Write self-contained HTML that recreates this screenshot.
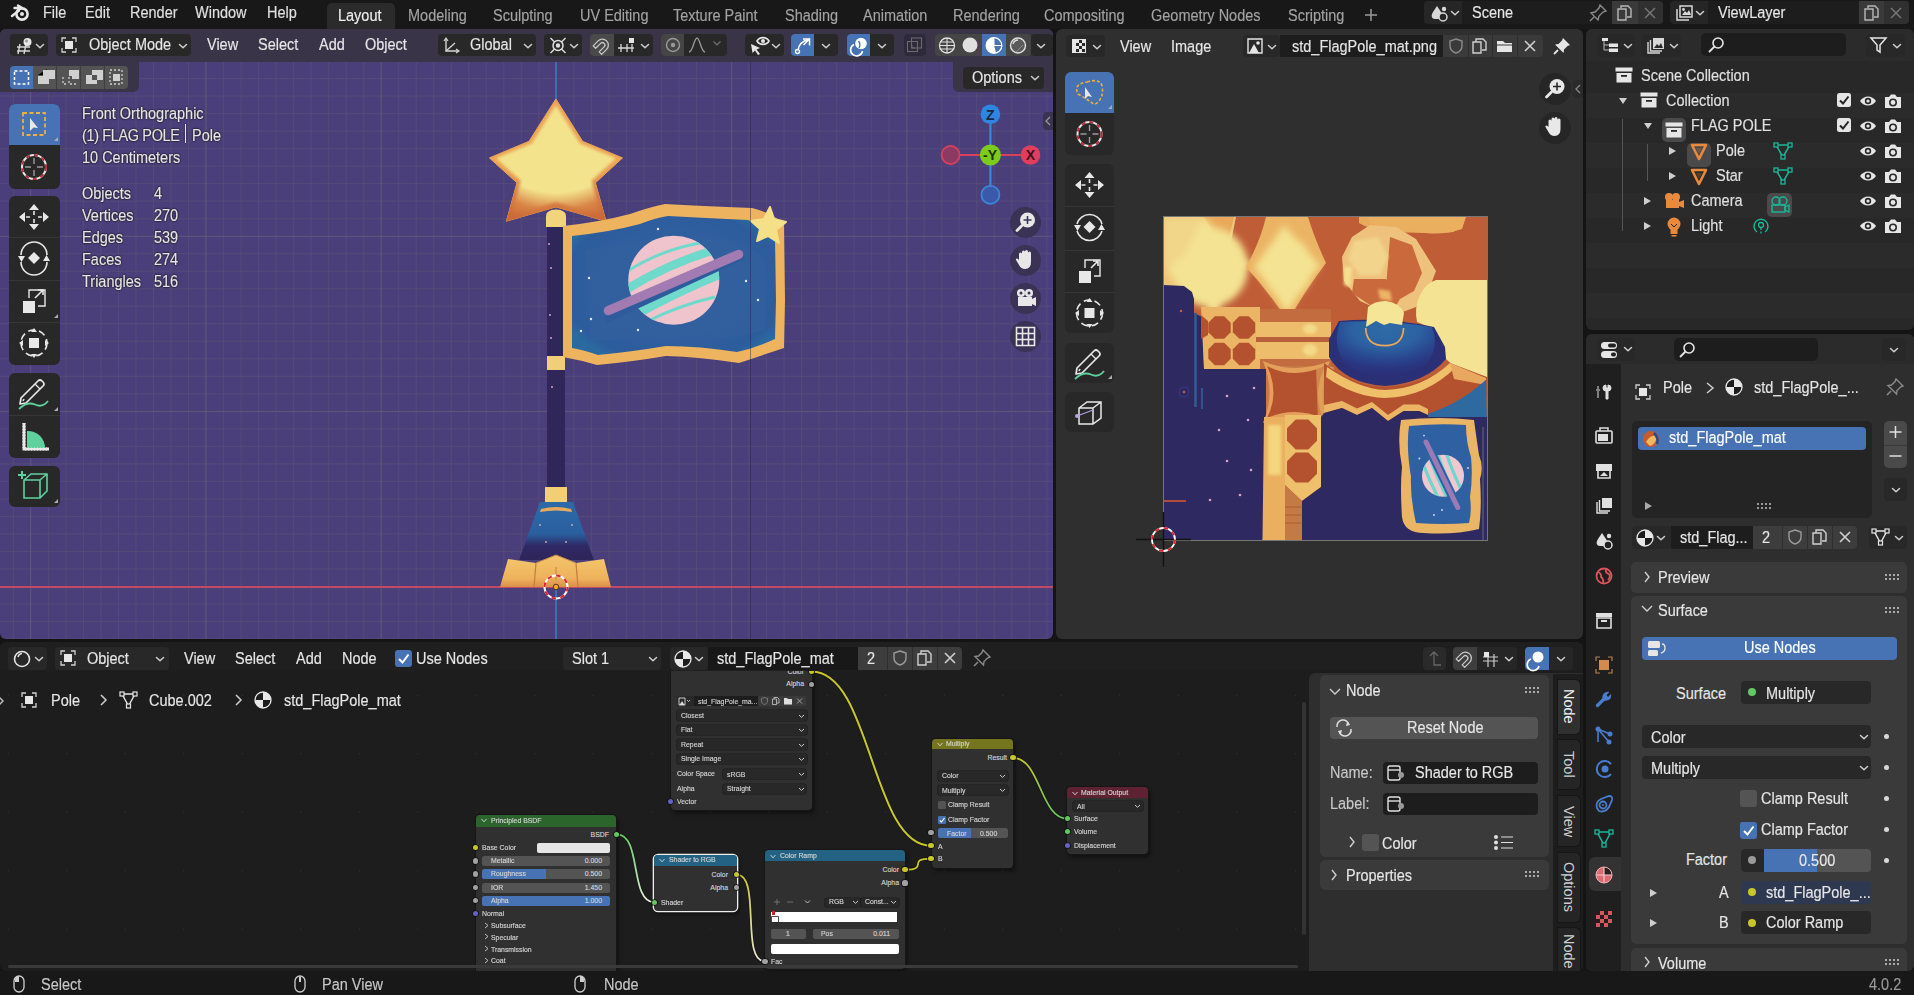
<!DOCTYPE html><html><head><meta charset="utf-8"><style>

*{box-sizing:border-box}
html,body{margin:0;padding:0}
body{width:1914px;height:995px;position:relative;overflow:hidden;background:#141414;font-family:"Liberation Sans",sans-serif;}
.r{position:absolute;display:block}
.t{position:absolute;white-space:nowrap;-webkit-text-stroke:0.15px currentColor}
.sh{text-shadow:0 0 2px #000,0 0 1px #000,1px 1px 1px rgba(0,0,0,.6)}
svg{overflow:visible}

</style></head><body>
<div class="r" style="left:0px;top:0px;width:1914px;height:29px;background:#181818;"></div>
<svg class="r" style="left:10px;top:3px;" width="22" height="20" viewBox="0 0 22 20"><circle cx="12" cy="11" r="5.6" fill="none" stroke="#e8e8e8" stroke-width="2.6"/><circle cx="12" cy="11" r="2" fill="#e8e8e8"/><path d="M2 13 L9 7.5 M4.5 5 L12 5 M8 2.5 L14 6" stroke="#e8e8e8" stroke-width="2.4" stroke-linecap="round"/></svg>
<div class="t " style="left:42.5px;top:4.50px;font-size:15.95px;line-height:15.95px;color:#e0e0e0;transform:scaleX(0.9091);transform-origin:0 0;">File</div>
<div class="t " style="left:84.5px;top:4.50px;font-size:15.95px;line-height:15.95px;color:#e0e0e0;transform:scaleX(0.9091);transform-origin:0 0;">Edit</div>
<div class="t " style="left:129.5px;top:4.50px;font-size:15.95px;line-height:15.95px;color:#e0e0e0;transform:scaleX(0.9091);transform-origin:0 0;">Render</div>
<div class="t " style="left:195px;top:4.50px;font-size:15.95px;line-height:15.95px;color:#e0e0e0;transform:scaleX(0.9091);transform-origin:0 0;">Window</div>
<div class="t " style="left:267.3px;top:4.50px;font-size:15.95px;line-height:15.95px;color:#e0e0e0;transform:scaleX(0.9091);transform-origin:0 0;">Help</div>
<div class="r" style="left:327px;top:3px;width:68px;height:26px;background:#2b2b2b;border-radius:5px 5px 0 0"></div>
<div class="t " style="left:338.4px;top:8.10px;font-size:15.95px;line-height:15.95px;color:#f0f0f0;transform:scaleX(0.9091);transform-origin:0 0;">Layout</div>
<div class="t " style="left:408.3px;top:8.10px;font-size:15.95px;line-height:15.95px;color:#a3a3a3;transform:scaleX(0.9091);transform-origin:0 0;">Modeling</div>
<div class="t " style="left:493px;top:8.10px;font-size:15.95px;line-height:15.95px;color:#a3a3a3;transform:scaleX(0.9091);transform-origin:0 0;">Sculpting</div>
<div class="t " style="left:579.7px;top:8.10px;font-size:15.95px;line-height:15.95px;color:#a3a3a3;transform:scaleX(0.9091);transform-origin:0 0;">UV Editing</div>
<div class="t " style="left:672.7px;top:8.10px;font-size:15.95px;line-height:15.95px;color:#a3a3a3;transform:scaleX(0.9091);transform-origin:0 0;">Texture Paint</div>
<div class="t " style="left:785.3px;top:8.10px;font-size:15.95px;line-height:15.95px;color:#a3a3a3;transform:scaleX(0.9091);transform-origin:0 0;">Shading</div>
<div class="t " style="left:863.2px;top:8.10px;font-size:15.95px;line-height:15.95px;color:#a3a3a3;transform:scaleX(0.9091);transform-origin:0 0;">Animation</div>
<div class="t " style="left:952.8px;top:8.10px;font-size:15.95px;line-height:15.95px;color:#a3a3a3;transform:scaleX(0.9091);transform-origin:0 0;">Rendering</div>
<div class="t " style="left:1044.3px;top:8.10px;font-size:15.95px;line-height:15.95px;color:#a3a3a3;transform:scaleX(0.9091);transform-origin:0 0;">Compositing</div>
<div class="t " style="left:1151px;top:8.10px;font-size:15.95px;line-height:15.95px;color:#a3a3a3;transform:scaleX(0.9091);transform-origin:0 0;">Geometry Nodes</div>
<div class="t " style="left:1287.5px;top:8.10px;font-size:15.95px;line-height:15.95px;color:#a3a3a3;transform:scaleX(0.9091);transform-origin:0 0;">Scripting</div>
<svg class="r" style="left:1363px;top:7px;" width="16" height="16" viewBox="0 0 16 16"><path d="M8 2 V14 M2 8 H14" stroke="#9a9a9a" stroke-width="1.5"/></svg>
<div class="r" style="left:1424px;top:1px;width:239px;height:23px;background:#262626;border-radius:4px"></div>
<div class="r" style="left:1462px;top:1px;width:150px;height:23px;background:#1d1d1d;"></div>
<div class="r" style="left:1612px;top:1px;width:26px;height:23px;background:#3a3a3a;"></div>
<div class="r" style="left:1638px;top:1px;width:25px;height:23px;background:#303030;border-radius:0 4px 4px 0"></div>
<svg class="r" style="left:1429px;top:3px;" width="40" height="20" viewBox="0 0 40 20"><path d="M6 16 C2 16 2 12 4 9 L8 3 L12 9 C14 12 13 16 9 16Z" fill="#d8d8d8"/><circle cx="15" cy="6" r="2.2" fill="#d8d8d8"/><circle cx="14" cy="14" r="4" fill="#262626" stroke="#d8d8d8" stroke-width="1.5"/></svg>
<svg class="r" style="left:1450px;top:10px;" width="10" height="6" viewBox="0 0 10 6"><path d="M1.5 1.5 L5 4.8 L8.5 1.5" fill="none" stroke="#cfcfcf" stroke-width="1.5" stroke-linecap="round" stroke-linejoin="round"/></svg>
<div class="t " style="left:1472.3px;top:5.10px;font-size:15.95px;line-height:15.95px;color:#e6e6e6;transform:scaleX(0.9091);transform-origin:0 0;">Scene</div>
<svg class="r" style="left:1588px;top:3px;" width="20" height="20" viewBox="0 0 20 20"><path d="M12 2 L18 8 L15 9 L11 13 L10 17 L3 10 L7 9 L11 5Z M6 14 L2 18" fill="none" stroke="#8a8a8a" stroke-width="1.4"/></svg>
<svg class="r" style="left:1615px;top:3px;" width="20" height="20" viewBox="0 0 20 20"><path d="M6 5 V3 H13 L16 6 V14 H12 M3 6 H11 V17 H3Z" fill="none" stroke="#b8b8b8" stroke-width="1.4"/></svg>
<svg class="r" style="left:1641px;top:4px;" width="18" height="18" viewBox="0 0 18 18"><path d="M4 4 L14 14 M14 4 L4 14" stroke="#7a7a7a" stroke-width="1.4"/></svg>
<div class="r" style="left:1670px;top:1px;width:239px;height:23px;background:#262626;border-radius:4px"></div>
<div class="r" style="left:1708px;top:1px;width:151px;height:23px;background:#1d1d1d;"></div>
<div class="r" style="left:1859px;top:1px;width:25px;height:23px;background:#3a3a3a;"></div>
<div class="r" style="left:1884px;top:1px;width:25px;height:23px;background:#303030;border-radius:0 4px 4px 0"></div>
<svg class="r" style="left:1674px;top:3px;" width="24" height="20" viewBox="0 0 24 20"><path d="M3 6 V17 H15 M6 3 H18 V14 H6Z" fill="none" stroke="#d8d8d8" stroke-width="1.5"/><path d="M8 12 L11 8 L13 10 L15 7 L17 12Z" fill="#d8d8d8"/><circle cx="9.5" cy="6.5" r="1.4" fill="#d8d8d8"/></svg>
<svg class="r" style="left:1695px;top:10px;" width="10" height="6" viewBox="0 0 10 6"><path d="M1.5 1.5 L5 4.8 L8.5 1.5" fill="none" stroke="#cfcfcf" stroke-width="1.5" stroke-linecap="round" stroke-linejoin="round"/></svg>
<div class="t " style="left:1718px;top:5.10px;font-size:15.95px;line-height:15.95px;color:#e6e6e6;transform:scaleX(0.9091);transform-origin:0 0;">ViewLayer</div>
<svg class="r" style="left:1862px;top:3px;" width="20" height="20" viewBox="0 0 20 20"><path d="M6 5 V3 H13 L16 6 V14 H12 M3 6 H11 V17 H3Z" fill="none" stroke="#b8b8b8" stroke-width="1.4"/></svg>
<svg class="r" style="left:1887px;top:4px;" width="18" height="18" viewBox="0 0 18 18"><path d="M4 4 L14 14 M14 4 L4 14" stroke="#7a7a7a" stroke-width="1.4"/></svg>
<div class="r" style="left:0px;top:29px;width:1053px;height:610px;background:#4b3f7a;border-radius:6px;overflow:hidden;background-color:#4b3f7b;background-image:linear-gradient(90deg, rgba(100,95,118,0.6) 1.2px, transparent 1.2px),linear-gradient(0deg, rgba(100,95,118,0.6) 1.2px, transparent 1.2px),linear-gradient(90deg, rgba(92,85,115,0.5) 1px, transparent 1px),linear-gradient(0deg, rgba(92,85,115,0.5) 1px, transparent 1px);background-size:175.3px 175.3px,175.3px 175.3px,17.53px 17.53px,17.53px 17.53px;background-position:30px 32.5px,30px 32.5px,12.9px 15px,12.9px 15px;"></div>
<div class="r" style="left:555px;top:29px;width:2px;height:72px;background:#3d6fb0;"></div>
<div class="r" style="left:555px;top:589px;width:2px;height:50px;background:#3d6fb0;"></div>
<div class="r" style="left:0px;top:586px;width:1053px;height:1.6px;background:#c04a62;"></div>
<div class="r" style="left:0px;top:29px;width:1053px;height:33px;background:#393448;border-radius:6px 6px 0 0"></div>
<div class="r" style="left:0px;top:62px;width:139px;height:30px;background:#393448;border-radius:0 0 6px 0"></div>
<div class="r" style="left:10px;top:34px;width:38px;height:22px;background:#282828;border-radius:4px;"></div>
<svg class="r" style="left:14px;top:36px;" width="24" height="18" viewBox="0 0 24 18"><path d="M3 11 H16 M3 15 H16 M6 8 L4 18 M12 8 L10 18" stroke="#d6d6d6" stroke-width="1.4"/><circle cx="13.5" cy="6" r="4" fill="#e6e6e6"/><circle cx="12.5" cy="5" r="1.5" fill="#999"/></svg>
<svg class="r" style="left:35px;top:43px;" width="10" height="6" viewBox="0 0 10 6"><path d="M1.5 1.5 L5 4.8 L8.5 1.5" fill="none" stroke="#cfcfcf" stroke-width="1.5" stroke-linecap="round" stroke-linejoin="round"/></svg>
<div class="r" style="left:56px;top:34px;width:135px;height:22px;background:#282828;border-radius:4px;"></div>
<svg class="r" style="left:60px;top:36px;" width="22" height="18" viewBox="0 0 22 18"><path d="M2 6 V2 H6 M12 2 H16 V6 M16 12 V16 H12 M6 16 H2 V12" fill="none" stroke="#cfcfcf" stroke-width="1.3"/><rect x="5" y="5" width="8" height="8" fill="#e6e6e6"/></svg>
<div class="t " style="left:88.5px;top:37.30px;font-size:15.95px;line-height:15.95px;color:#e6e6e6;transform:scaleX(0.9091);transform-origin:0 0;">Object Mode</div>
<svg class="r" style="left:178px;top:43px;" width="10" height="6" viewBox="0 0 10 6"><path d="M1.5 1.5 L5 4.8 L8.5 1.5" fill="none" stroke="#cfcfcf" stroke-width="1.5" stroke-linecap="round" stroke-linejoin="round"/></svg>
<div class="t " style="left:207px;top:37.30px;font-size:15.95px;line-height:15.95px;color:#e6e6e6;transform:scaleX(0.9091);transform-origin:0 0;">View</div>
<div class="t " style="left:258px;top:37.30px;font-size:15.95px;line-height:15.95px;color:#e6e6e6;transform:scaleX(0.9091);transform-origin:0 0;">Select</div>
<div class="t " style="left:319px;top:37.30px;font-size:15.95px;line-height:15.95px;color:#e6e6e6;transform:scaleX(0.9091);transform-origin:0 0;">Add</div>
<div class="t " style="left:365px;top:37.30px;font-size:15.95px;line-height:15.95px;color:#e6e6e6;transform:scaleX(0.9091);transform-origin:0 0;">Object</div>
<div class="r" style="left:438px;top:34px;width:98px;height:22px;background:#282828;border-radius:4px;"></div>
<svg class="r" style="left:442px;top:35px;" width="22" height="20" viewBox="0 0 22 20"><path d="M4 4 V16 H16" fill="none" stroke="#d6d6d6" stroke-width="1.4"/><path d="M4 16 L13 8" stroke="#d6d6d6" stroke-width="1.4"/><path d="M2 6 L4 3 L6 6 M14 14 L17 16 L14 18" fill="none" stroke="#d6d6d6" stroke-width="1.2"/></svg>
<div class="t " style="left:470px;top:37.30px;font-size:15.95px;line-height:15.95px;color:#e6e6e6;transform:scaleX(0.9091);transform-origin:0 0;">Global</div>
<svg class="r" style="left:523px;top:43px;" width="10" height="6" viewBox="0 0 10 6"><path d="M1.5 1.5 L5 4.8 L8.5 1.5" fill="none" stroke="#cfcfcf" stroke-width="1.5" stroke-linecap="round" stroke-linejoin="round"/></svg>
<div class="r" style="left:544px;top:34px;width:38px;height:22px;background:#282828;border-radius:4px;"></div>
<svg class="r" style="left:548px;top:36px;" width="20" height="19" viewBox="0 0 20 19"><circle cx="10" cy="9.5" r="5" fill="none" stroke="#e0e0e0" stroke-width="1.5"/><circle cx="10" cy="9.5" r="2.2" fill="#e0e0e0"/><path d="M2.5 2 L6.5 6 M17.5 2 L13.5 6 M2.5 17 L6.5 13 M17.5 17 L13.5 13" stroke="#e0e0e0" stroke-width="1.4"/></svg>
<svg class="r" style="left:569px;top:43px;" width="10" height="6" viewBox="0 0 10 6"><path d="M1.5 1.5 L5 4.8 L8.5 1.5" fill="none" stroke="#cfcfcf" stroke-width="1.5" stroke-linecap="round" stroke-linejoin="round"/></svg>
<div class="r" style="left:590px;top:34px;width:63px;height:22px;background:#282828;border-radius:4px;"></div>
<div class="r" style="left:590px;top:34px;width:24px;height:22px;background:#4a4a4a;border-radius:4px 0 0 4px"></div>
<svg class="r" style="left:592px;top:36px;" width="20" height="19" viewBox="0 0 20 19"><g transform="rotate(45 10 9.5)"><path d="M4 16 V9 A6 6 0 0 1 16 9 V16 H12.5 V9 A2.5 2.5 0 0 0 7.5 9 V16Z" fill="none" stroke="#c8c8c8" stroke-width="1.3" stroke-linejoin="round"/></g></svg>
<svg class="r" style="left:616px;top:36px;" width="22" height="18" viewBox="0 0 22 18"><path d="M2 12 H18 M5 8 V16 M11 8 V16 M16 8 V16" stroke="#d6d6d6" stroke-width="1.3"/><rect x="13" y="2" width="5" height="5" fill="#e6e6e6"/></svg>
<svg class="r" style="left:640px;top:43px;" width="10" height="6" viewBox="0 0 10 6"><path d="M1.5 1.5 L5 4.8 L8.5 1.5" fill="none" stroke="#cfcfcf" stroke-width="1.5" stroke-linecap="round" stroke-linejoin="round"/></svg>
<div class="r" style="left:661px;top:34px;width:66px;height:22px;background:#282828;border-radius:4px;"></div>
<div class="r" style="left:661px;top:34px;width:23px;height:22px;background:#454545;border-radius:4px 0 0 4px"></div>
<svg class="r" style="left:663px;top:36px;" width="20" height="18" viewBox="0 0 20 18"><circle cx="10" cy="9" r="6.5" fill="none" stroke="#9a9a9a" stroke-width="1.4"/><circle cx="10" cy="9" r="2.2" fill="#9a9a9a"/></svg>
<svg class="r" style="left:687px;top:36px;" width="22" height="18" viewBox="0 0 22 18"><path d="M2 16 C6 16 7 2 10 2 C13 2 14 16 18 16" fill="none" stroke="#9a9a9a" stroke-width="1.3"/></svg>
<svg class="r" style="left:712px;top:40px;" width="10" height="8" viewBox="0 0 10 8"><path d="M1.5 1.5 L5 4.8 L8.5 1.5" fill="none" stroke="#6a6a6a" stroke-width="1.4"/></svg>
<div class="r" style="left:745px;top:34px;width:39px;height:22px;background:#282828;border-radius:4px;"></div>
<svg class="r" style="left:748px;top:35px;" width="22" height="20" viewBox="0 0 22 20"><path d="M9 6 C11.5 1.5 18.5 1.5 21 6 C18.5 10.5 11.5 10.5 9 6Z" fill="none" stroke="#e6e6e6" stroke-width="1.6"/><circle cx="15" cy="6" r="2" fill="#e6e6e6"/><path d="M3 9 L12 13 L8.5 14.5 L12 19 L10 20 L7 15.5 L4.5 18Z" fill="#e6e6e6"/></svg>
<svg class="r" style="left:771px;top:43px;" width="10" height="6" viewBox="0 0 10 6"><path d="M1.5 1.5 L5 4.8 L8.5 1.5" fill="none" stroke="#cfcfcf" stroke-width="1.5" stroke-linecap="round" stroke-linejoin="round"/></svg>
<div class="r" style="left:791px;top:34px;width:47px;height:22px;background:#282828;border-radius:4px;"></div>
<div class="r" style="left:791px;top:34px;width:23px;height:22px;background:#4772b3;border-radius:4px 0 0 4px"></div>
<svg class="r" style="left:793px;top:36px;" width="20" height="19" viewBox="0 0 20 19"><path d="M5 14.5 C5.5 9 9 5 16 3.5" fill="none" stroke="#fff" stroke-width="1.5"/><path d="M10 3 H16.5 V9.5" fill="none" stroke="#fff" stroke-width="1.5"/><path d="M16.5 3 L10.5 9" stroke="#fff" stroke-width="1.5"/><circle cx="4.5" cy="15.5" r="2" fill="none" stroke="#fff" stroke-width="1.4"/></svg>
<svg class="r" style="left:821px;top:43px;" width="10" height="6" viewBox="0 0 10 6"><path d="M1.5 1.5 L5 4.8 L8.5 1.5" fill="none" stroke="#cfcfcf" stroke-width="1.5" stroke-linecap="round" stroke-linejoin="round"/></svg>
<div class="r" style="left:847px;top:34px;width:47px;height:22px;background:#282828;border-radius:4px;"></div>
<div class="r" style="left:847px;top:34px;width:23px;height:22px;background:#4772b3;border-radius:4px 0 0 4px"></div>
<svg class="r" style="left:849px;top:36px;" width="20" height="19" viewBox="0 0 20 19"><circle cx="12" cy="7.5" r="5.8" fill="#fff"/><path d="M9.5 5 Q12 8 10 12" fill="none" stroke="#4772b3" stroke-width="1.4"/><path d="M5 8.5 A6 6 0 1 0 13.5 15" fill="none" stroke="#fff" stroke-width="1.6"/></svg>
<svg class="r" style="left:877px;top:43px;" width="10" height="6" viewBox="0 0 10 6"><path d="M1.5 1.5 L5 4.8 L8.5 1.5" fill="none" stroke="#cfcfcf" stroke-width="1.5" stroke-linecap="round" stroke-linejoin="round"/></svg>
<div class="r" style="left:904px;top:34px;width:22px;height:22px;background:#2e2a3b;border-radius:4px;"></div>
<svg class="r" style="left:906px;top:36px;" width="18" height="18" viewBox="0 0 18 18"><rect x="1.5" y="5.5" width="10" height="10" fill="none" stroke="#6a6a6a" stroke-width="1.1"/><rect x="5.5" y="2" width="10" height="10" fill="none" stroke="#6a6a6a" stroke-width="1.1"/><path d="M6 9 V12 H9" fill="none" stroke="#6a6a6a" stroke-width="1"/></svg>
<div class="r" style="left:935px;top:34px;width:96px;height:22px;background:#454545;border-radius:4px;"></div>
<div class="r" style="left:982px;top:34px;width:24px;height:22px;background:#4772b3;"></div>
<svg class="r" style="left:937px;top:36px;" width="20" height="19" viewBox="0 0 20 19"><circle cx="10" cy="9.5" r="7.5" fill="none" stroke="#e0e0e0" stroke-width="1.3"/><path d="M2.5 9.5 H17.5 M10 2 V17 M3.5 6 H16.5 M3.5 13 H16.5" stroke="#e0e0e0" stroke-width="1.1"/></svg>
<svg class="r" style="left:960px;top:36px;" width="20" height="18" viewBox="0 0 20 18"><circle cx="10" cy="9" r="7.5" fill="#e0e0e0"/></svg>
<svg class="r" style="left:984px;top:36px;" width="20" height="19" viewBox="0 0 20 19"><circle cx="10" cy="9.5" r="7.8" fill="#fff"/><path d="M10 9.5 V1.7 A7.8 7.8 0 0 1 17.8 9.5 A7.8 7.8 0 0 1 12 17 Q11 12 10 9.5Z" fill="#4772b3"/><path d="M10 1.7 V9.5 L17.8 9.5" fill="none" stroke="#fff" stroke-width="1"/><circle cx="10" cy="9.5" r="7.8" fill="none" stroke="#fff" stroke-width="1.3"/></svg>
<svg class="r" style="left:1008px;top:36px;" width="20" height="19" viewBox="0 0 20 19"><circle cx="10" cy="9.5" r="7.5" fill="#5a5a5a" stroke="#e0e0e0" stroke-width="1.4"/><path d="M5 8 A5.5 5.5 0 0 1 10 4" fill="none" stroke="#e0e0e0" stroke-width="1.3"/><path d="M8 16 L15 9" stroke="#888" stroke-width="1"/></svg>
<div class="r" style="left:1031px;top:34px;width:22px;height:22px;background:#282828;border-radius:4px;"></div>
<svg class="r" style="left:1036px;top:43px;" width="10" height="6" viewBox="0 0 10 6"><path d="M1.5 1.5 L5 4.8 L8.5 1.5" fill="none" stroke="#cfcfcf" stroke-width="1.5" stroke-linecap="round" stroke-linejoin="round"/></svg>
<div class="r" style="left:32px;top:66px;width:96px;height:23px;background:#545454;border-radius:0 4px 4px 0"></div>
<div class="r" style="left:9.5px;top:66px;width:23px;height:23px;background:#4772b3;border-radius:4px 0 0 4px"></div>
<div class="r" style="left:56px;top:66px;width:1px;height:23px;background:#3f3f3f;"></div>
<div class="r" style="left:80px;top:66px;width:1px;height:23px;background:#3f3f3f;"></div>
<div class="r" style="left:104px;top:66px;width:1px;height:23px;background:#3f3f3f;"></div>
<svg class="r" style="left:9.5px;top:66px;" width="118" height="23" viewBox="0 0 118 23"><rect x="4.5" y="5" width="14" height="13" fill="none" stroke="#fff" stroke-width="1.5" stroke-dasharray="3 2"/><path d="M28 9 H37 V3? " /><path d="M28 18 V10 H33 V4 H45 V13 H39 V18Z" fill="#d0d0d0"/><path d="M59 11 V18 H67 M53 11 V18 H58" fill="none" stroke="#d0d0d0" stroke-width="1.3" stroke-dasharray="2 2"/><path d="M59 4 H69 V13 H62 V10 H59Z" fill="#d0d0d0"/><path d="M76 9 H82 V4 H93 V14 H87 V18 H76Z M82 9 V14 H87 V9Z" fill="#d0d0d0" fill-rule="evenodd"/><rect x="100" y="4" width="12" height="14" fill="none" stroke="#d0d0d0" stroke-width="1.3" stroke-dasharray="2 2"/><rect x="103" y="8" width="7" height="7" fill="#d0d0d0"/></svg>
<div class="r" style="left:9px;top:104px;width:51px;height:85px;background:#282828;border-radius:6px 6px 6px 6px"></div>
<div class="r" style="left:9px;top:104px;width:51px;height:41px;background:#4772b3;border-radius:6px 6px 0 0"></div>
<div class="r" style="left:9px;top:196px;width:51px;height:169px;background:#282828;border-radius:6px 6px 6px 6px"></div>
<div class="r" style="left:9px;top:373px;width:51px;height:85px;background:#282828;border-radius:6px 6px 6px 6px"></div>
<div class="r" style="left:9px;top:466px;width:51px;height:41px;background:#282828;border-radius:6px 6px 6px 6px"></div>
<div class="r" style="left:9px;top:237px;width:51px;height:1px;background:#363636;"></div>
<div class="r" style="left:9px;top:280px;width:51px;height:1px;background:#363636;"></div>
<div class="r" style="left:9px;top:322px;width:51px;height:1px;background:#363636;"></div>
<div class="r" style="left:9px;top:415px;width:51px;height:1px;background:#363636;"></div>
<svg class="r" style="left:9px;top:104px;" width="51" height="41" viewBox="0 0 51 41"><rect x="14" y="9" width="22" height="22" fill="none" stroke="#f0b03a" stroke-width="1.8" stroke-dasharray="4 2.5"/><path d="M21 14 L21 27 L24.5 23.5 L29 24Z" fill="#e8e8e8"/><path d="M45 37 L49 37 L49 33Z" fill="#aab"/></svg>
<svg class="r" style="left:9px;top:145px;" width="51" height="44" viewBox="0 0 51 44"><circle cx="25" cy="22" r="12" fill="none" stroke="#e8e8e8" stroke-width="2"/><circle cx="25" cy="22" r="12" fill="none" stroke="#b32d3a" stroke-width="2" stroke-dasharray="4 4"/><path d="M25 13 V19 M25 25 V31 M16 22 H22 M28 22 H34" stroke="#9a9a9a" stroke-width="1.4"/></svg>
<svg class="r" style="left:9px;top:196px;" width="51" height="41" viewBox="0 0 51 41"><path d="M25 8 L20 14 H30Z M25 34 L20 28 H30Z M10 21 L16 16 V26Z M40 21 L34 16 V26Z" fill="#e8e8e8"/><path d="M25 15 V19 M25 23 V27 M17 21 H21 M29 21 H33" stroke="#e8e8e8" stroke-width="1.6"/></svg>
<svg class="r" style="left:9px;top:237px;" width="51" height="43" viewBox="0 0 51 43"><path d="M12 18 A13 13 0 0 1 38 18 M38 25 A13 13 0 0 1 12 25" fill="none" stroke="#e8e8e8" stroke-width="1.6"/><path d="M25 15 L31 21 L25 27 L19 21Z" fill="#e8e8e8"/><path d="M9 19 H16 L12.5 25Z M34 24 H41 L37.5 18Z" fill="#e8e8e8"/></svg>
<svg class="r" style="left:9px;top:280px;" width="51" height="42" viewBox="0 0 51 42"><rect x="14" y="21" width="12" height="12" fill="#e8e8e8"/><path d="M20 18 V10 H36 V26 H29" fill="none" stroke="#e8e8e8" stroke-width="1.4"/><path d="M26 18 L34 10 M29 10 H34 V15" fill="none" stroke="#e8e8e8" stroke-width="1.6"/><path d="M45 38 L49 38 L49 34Z" fill="#aab"/></svg>
<svg class="r" style="left:9px;top:322px;" width="51" height="43" viewBox="0 0 51 43"><circle cx="25" cy="21" r="13" fill="none" stroke="#e8e8e8" stroke-width="1.6" stroke-dasharray="7 4"/><rect x="20" y="16" width="10" height="10" fill="#e8e8e8"/><path d="M25 6 L22 10 H28Z M25 36 L22 32 H28Z M10 21 L14 18 V24Z M40 21 L36 18 V24Z" fill="#e8e8e8"/></svg>
<svg class="r" style="left:9px;top:373px;" width="51" height="42" viewBox="0 0 51 42"><path d="M12 25 L29 8 Q31 6 33 8 L34 9 Q36 11 34 13 L17 30 L11 31Z" fill="none" stroke="#e8e8e8" stroke-width="1.7" stroke-linejoin="round"/><path d="M14 28 L15 26" stroke="#e8e8e8" stroke-width="1.5"/><path d="M26 11 L31 16" stroke="#e8e8e8" stroke-width="1.3"/><path d="M10 36 C15 31 20 29 26 31.5 C31 34 35 33 39 28" fill="none" stroke="#5fd19c" stroke-width="1.8"/><path d="M45 38 L49 38 L49 34Z" fill="#aab"/></svg>
<svg class="r" style="left:9px;top:415px;" width="51" height="43" viewBox="0 0 51 43"><path d="M15 8 V34 H40" fill="none" stroke="#e8e8e8" stroke-width="3"/><path d="M18 33 V16 A17 17 0 0 1 36 33Z" fill="#5fd19c"/><path d="M15 8 V34 H40" fill="none" stroke="#e8e8e8" stroke-width="3" stroke-dasharray="1 2"/></svg>
<svg class="r" style="left:9px;top:466px;" width="51" height="41" viewBox="0 0 51 41"><path d="M15 14 V32 H31 L38 25 V8 H22Z M15 14 H31 V32 M31 14 L38 8" fill="none" stroke="#5fd19c" stroke-width="1.6"/><path d="M9 9 H17 M13 5 V13" stroke="#5fd19c" stroke-width="2"/><path d="M45 37 L49 37 L49 33Z" fill="#aab"/></svg>
<div class="t " style="left:82px;top:105.70px;font-size:15.95px;line-height:15.95px;color:#e6e6e6;transform:scaleX(0.9091);transform-origin:0 0;text-shadow:0 0 2px #111,0 0 2px #111;">Front Orthographic</div>
<div class="t " style="left:82px;top:127.70px;font-size:15.95px;line-height:15.95px;color:#e6e6e6;transform:scaleX(0.9091);transform-origin:0 0;text-shadow:0 0 2px #111,0 0 2px #111;letter-spacing:-0.4px;">(1) FLAG POLE</div>
<div class="r" style="left:185px;top:124px;width:1.3px;height:19px;background:#e8e8e8;box-shadow:0 0 2px #111"></div>
<div class="t " style="left:192px;top:127.70px;font-size:15.95px;line-height:15.95px;color:#e6e6e6;transform:scaleX(0.9091);transform-origin:0 0;text-shadow:0 0 2px #111,0 0 2px #111;">Pole</div>
<div class="t " style="left:82px;top:149.70px;font-size:15.95px;line-height:15.95px;color:#e6e6e6;transform:scaleX(0.9091);transform-origin:0 0;text-shadow:0 0 2px #111,0 0 2px #111;">10 Centimeters</div>
<div class="t " style="left:82px;top:185.70px;font-size:15.95px;line-height:15.95px;color:#e6e6e6;transform:scaleX(0.9091);transform-origin:0 0;text-shadow:0 0 2px #111,0 0 2px #111;">Objects</div>
<div class="t " style="left:154px;top:185.70px;font-size:15.95px;line-height:15.95px;color:#e6e6e6;transform:scaleX(0.9091);transform-origin:0 0;text-shadow:0 0 2px #111,0 0 2px #111;">4</div>
<div class="t " style="left:82px;top:207.70px;font-size:15.95px;line-height:15.95px;color:#e6e6e6;transform:scaleX(0.9091);transform-origin:0 0;text-shadow:0 0 2px #111,0 0 2px #111;">Vertices</div>
<div class="t " style="left:154px;top:207.70px;font-size:15.95px;line-height:15.95px;color:#e6e6e6;transform:scaleX(0.9091);transform-origin:0 0;text-shadow:0 0 2px #111,0 0 2px #111;">270</div>
<div class="t " style="left:82px;top:229.70px;font-size:15.95px;line-height:15.95px;color:#e6e6e6;transform:scaleX(0.9091);transform-origin:0 0;text-shadow:0 0 2px #111,0 0 2px #111;">Edges</div>
<div class="t " style="left:154px;top:229.70px;font-size:15.95px;line-height:15.95px;color:#e6e6e6;transform:scaleX(0.9091);transform-origin:0 0;text-shadow:0 0 2px #111,0 0 2px #111;">539</div>
<div class="t " style="left:82px;top:251.70px;font-size:15.95px;line-height:15.95px;color:#e6e6e6;transform:scaleX(0.9091);transform-origin:0 0;text-shadow:0 0 2px #111,0 0 2px #111;">Faces</div>
<div class="t " style="left:154px;top:251.70px;font-size:15.95px;line-height:15.95px;color:#e6e6e6;transform:scaleX(0.9091);transform-origin:0 0;text-shadow:0 0 2px #111,0 0 2px #111;">274</div>
<div class="t " style="left:82px;top:273.70px;font-size:15.95px;line-height:15.95px;color:#e6e6e6;transform:scaleX(0.9091);transform-origin:0 0;text-shadow:0 0 2px #111,0 0 2px #111;">Triangles</div>
<div class="t " style="left:154px;top:273.70px;font-size:15.95px;line-height:15.95px;color:#e6e6e6;transform:scaleX(0.9091);transform-origin:0 0;text-shadow:0 0 2px #111,0 0 2px #111;">516</div>
<div class="r" style="left:953px;top:62px;width:100px;height:30px;background:#393448;border-radius:0 0 0 6px"></div>
<div class="r" style="left:963px;top:67px;width:81px;height:22px;background:#282828;border-radius:4px;"></div>
<div class="t " style="left:972.4px;top:70.30px;font-size:15.95px;line-height:15.95px;color:#e6e6e6;transform:scaleX(0.9091);transform-origin:0 0;">Options</div>
<svg class="r" style="left:1030px;top:75px;" width="10" height="6" viewBox="0 0 10 6"><path d="M1.5 1.5 L5 4.8 L8.5 1.5" fill="none" stroke="#cfcfcf" stroke-width="1.5" stroke-linecap="round" stroke-linejoin="round"/></svg>
<div class="r" style="left:1043px;top:112px;width:10px;height:18px;background:#3a3452;border-radius:4px 0 0 4px"></div>
<svg class="r" style="left:1044px;top:114px;" width="8" height="14" viewBox="0 0 8 14"><path d="M6 3 L2 7 L6 11" fill="none" stroke="#999" stroke-width="1.3"/></svg>
<svg class="r" style="left:930px;top:95px;" width="120" height="120" viewBox="0 0 120 120"><path d="M20.6 60 H100.5" stroke="#d8405c" stroke-width="2.2"/><path d="M60.4 19.3 V99.8" stroke="#3a86d8" stroke-width="2.2"/><circle cx="20.6" cy="60" r="9" fill="#8c3a64" stroke="#d8405c" stroke-width="1.8"/><circle cx="60.4" cy="99.8" r="9" fill="#3c58a8" stroke="#3a86d8" stroke-width="1.8"/><circle cx="60.4" cy="19.3" r="9.8" fill="#2f86e0"/><circle cx="100.5" cy="60" r="9.8" fill="#e03e5c"/><circle cx="60.4" cy="60" r="10.5" fill="#7ccc1c"/><text x="60.4" y="24.5" font-family="Liberation Sans" font-weight="bold" font-size="14" text-anchor="middle" fill="#1a2840">Z</text><text x="100.5" y="65.2" font-family="Liberation Sans" font-weight="bold" font-size="14" text-anchor="middle" fill="#40101a">X</text><text x="60" y="65.2" font-family="Liberation Sans" font-weight="bold" font-size="14" text-anchor="middle" fill="#1f3306">-Y</text></svg>
<div class="r" style="left:1010px;top:207.3px;width:31px;height:31px;background:#3b3356;border-radius:50%"></div>
<div class="r" style="left:1010px;top:245.0px;width:31px;height:31px;background:#3b3356;border-radius:50%"></div>
<div class="r" style="left:1010px;top:283.1px;width:31px;height:31px;background:#3b3356;border-radius:50%"></div>
<div class="r" style="left:1010px;top:321.2px;width:31px;height:31px;background:#3b3356;border-radius:50%"></div>
<svg class="r" style="left:1010px;top:207.3px;" width="31" height="31" viewBox="0 0 31 31"><circle cx="17.5" cy="13" r="7.5" fill="#e8e8e8"/><path d="M17.5 9 V17 M13.5 13 H21.5" stroke="#3b3356" stroke-width="1.6"/><path d="M12 18.5 L7 23.5" stroke="#e8e8e8" stroke-width="2.8" stroke-linecap="round"/></svg>
<svg class="r" style="left:1010px;top:245px;" width="31" height="31" viewBox="0 0 31 31"><path d="M9 15 V9 Q9 7.5 10.5 7.5 Q12 7.5 12 9 V14 V7 Q12 5.5 13.5 5.5 Q15 5.5 15 7 V14 V6.5 Q15 5 16.5 5 Q18 5 18 6.5 V14 V8 Q18 6.5 19.5 6.5 Q21 6.5 21 8 V17 Q21 24 15 24 Q11 24 9 20 L6 15 Q5.5 13.5 7 13.5 Q8 13.5 9 15Z" fill="#e8e8e8"/></svg>
<svg class="r" style="left:1010px;top:283px;" width="31" height="31" viewBox="0 0 31 31"><circle cx="11" cy="10" r="4" fill="#e8e8e8"/><circle cx="19" cy="10" r="4" fill="#e8e8e8"/><rect x="8" y="14" width="14" height="9" fill="#e8e8e8"/><path d="M22 16 L26 14 V23 L22 21Z" fill="#e8e8e8"/><circle cx="11" cy="10" r="1.5" fill="#3b3356"/><circle cx="19" cy="10" r="1.5" fill="#3b3356"/></svg>
<svg class="r" style="left:1010px;top:321px;" width="31" height="31" viewBox="0 0 31 31"><path d="M6.5 6.5 H24.5 V24.5 H6.5Z M12.5 6.5 V24.5 M18.5 6.5 V24.5 M6.5 12.5 H24.5 M6.5 18.5 H24.5" fill="none" stroke="#e8e8e8" stroke-width="1.6"/></svg>
<svg class="r" style="left:0;top:0" width="1053" height="639" viewBox="0 0 1053 639"><defs><radialGradient id="starG" cx="0.5" cy="0.42" r="0.6"><stop offset="0.45" stop-color="#f5e38c"/><stop offset="0.75" stop-color="#f0c46c"/><stop offset="1" stop-color="#d2773e"/></radialGradient><linearGradient id="starB" x1="0" y1="0" x2="0" y2="1"><stop offset="0.5" stop-color="#eba455" stop-opacity="0"/><stop offset="0.8" stop-color="#d67a40" stop-opacity="1"/><stop offset="1" stop-color="#d06e3a" stop-opacity="1"/></linearGradient><radialGradient id="flagG" cx="0.5" cy="0.5" r="0.6"><stop offset="0.5" stop-color="#3160a0"/><stop offset="0.9" stop-color="#2c5c9c"/><stop offset="1" stop-color="#2a6aa0"/></radialGradient><linearGradient id="coneG" x1="0" y1="0" x2="0" y2="1"><stop offset="0" stop-color="#2d6aa8"/><stop offset="0.55" stop-color="#2a5f9f"/><stop offset="0.75" stop-color="#2f2a66"/><stop offset="1" stop-color="#2e2558"/></linearGradient><linearGradient id="baseG" x1="0" y1="0" x2="0" y2="1"><stop offset="0" stop-color="#f3c56a"/><stop offset="0.7" stop-color="#eeb25c"/><stop offset="1" stop-color="#dc8e4a"/></linearGradient><radialGradient id="starB2" gradientUnits="userSpaceOnUse" cx="556" cy="112" r="112"><stop offset="0.72" stop-color="#d67a40" stop-opacity="0"/><stop offset="0.88" stop-color="#d67a40" stop-opacity="0.9"/><stop offset="1" stop-color="#cc6a38" stop-opacity="1"/></radialGradient><filter id="softS" x="-20%" y="-20%" width="140%" height="140%"><feGaussianBlur stdDeviation="1.8"/></filter><clipPath id="planetC"><ellipse cx="673.8" cy="280.2" rx="45.5" ry="44.5"/></clipPath></defs><rect x="547" y="215" width="18" height="275" fill="#2f2659"/><rect x="547" y="356" width="18" height="14" fill="#f1cf78"/><circle cx="549" cy="244" r="1" fill="#d9a0c8"/><circle cx="551" cy="268" r="1" fill="#d9a0c8"/><circle cx="550" cy="315" r="1" fill="#d9a0c8"/><circle cx="551" cy="338" r="1" fill="#d9a0c8"/><circle cx="552" cy="387" r="1" fill="#d9a0c8"/><path d="M555.9 99 L582.6 141.3 L622.5 157.9 L595.4 182.8 L606 221.2 L555.9 206.9 L506.4 221.2 L517 182.8 L489.4 157.9 L529 141.3Z" fill="#eba455" stroke="#eba455" stroke-width="1" stroke-linejoin="miter"/><path d="M555.9 99 L582.6 141.3 L622.5 157.9 L595.4 182.8 L606 221.2 L555.9 206.9 L506.4 221.2 L517 182.8 L489.4 157.9 L529 141.3Z" fill="url(#starB)"/><g filter="url(#softS)"><path d="M555.9 105.3 L579.9 143.4 L615.9 158.3 L591.5 180.7 L601.0 215.3 L555.9 202.4 L511.4 215.3 L520.9 180.7 L496.1 158.3 L531.7 143.4Z" fill="#f3e38c"/><ellipse cx="556" cy="170" rx="34" ry="26" fill="#f3e38c"/></g><path d="M555.9 99 L582.6 141.3 L622.5 157.9 L595.4 182.8 L606 221.2 L555.9 206.9 L506.4 221.2 L517 182.8 L489.4 157.9 L529 141.3Z" fill="url(#starB2)"/><path d="M546 227 V216 Q546 210 556 209.5 Q566 210 566 216 V227Z" fill="#f2d47c"/><path d="M563 226 Q600 222 630 214 Q650 207 665 204 Q700 206 752 208 Q770 212 784 224 L785 300 L784 348 Q760 356 739 363 Q700 357 666 356 Q630 362 597 365 Q580 360 563 357Z" fill="#eeb35e"/><path d="M572 236 Q610 232 640 224 Q655 218 668 216 Q705 218 748 220 Q765 226 775 238 L776 300 L775 339 Q755 348 737 352 Q700 346 666 346 Q630 352 598 355 Q584 350 572 348Z" fill="url(#flagG)"/><path d="M585 250 Q640 238 700 236 Q750 240 765 260 L765 330 Q730 342 690 338 Q630 340 590 340Z" fill="#33619f" opacity="0.6"/><g clip-path="url(#planetC)"><rect x="620" y="230" width="110" height="110" fill="#efc4cc"/><path d="M626 272 Q660 250 700 243" stroke="#6fd9cb" stroke-width="3" fill="none"/><path d="M624 291 Q665 265 714 250" stroke="#6fd9cb" stroke-width="8.5" fill="none"/><path d="M636 314 Q680 290 722 273" stroke="#6fd9cb" stroke-width="9.5" fill="none"/><path d="M648 321 Q680 305 715 297" stroke="#6fd9cb" stroke-width="3" fill="none"/></g><path d="M606 320 L744 256" stroke="#2f5a9c" stroke-width="6"/><path d="M608.5 310.5 L738.5 254.5" stroke="#a17bb2" stroke-width="9.5" stroke-linecap="round"/><circle cx="658" cy="229" r="1.2" fill="#e6e6f6"/><circle cx="589" cy="278" r="1.2" fill="#e6e6f6"/><circle cx="746" cy="281" r="1.2" fill="#e6e6f6"/><circle cx="758" cy="300" r="1.2" fill="#e6e6f6"/><circle cx="591" cy="319" r="1.2" fill="#e6e6f6"/><circle cx="581" cy="331" r="1.2" fill="#e6e6f6"/><circle cx="638" cy="330" r="1.2" fill="#e6e6f6"/><path d="M770 207 L774 219 L786 222 L776 230 L779 243 L768 236 L757 241 L760 229 L751 221 L764 219Z" fill="#f4e088" stroke="#f4e088" stroke-width="2" stroke-linejoin="round"/><rect x="545" y="487" width="22" height="15" fill="#f2cf74"/><path d="M540 502 L573 502 L594 560 L519 560Z" fill="url(#coneG)"/><path d="M541 509 Q556 505 571 509 L572 512 Q556 509 540 512Z" fill="#e8a95a"/><circle cx="540" cy="525" r="0.9" fill="#d8b0a0"/><circle cx="572" cy="525" r="0.9" fill="#d8b0a0"/><circle cx="546" cy="542" r="0.9" fill="#d8b0a0"/><circle cx="566" cy="542" r="0.9" fill="#d8b0a0"/><path d="M500 587 L508 559 L536 563 L535 587Z" fill="url(#baseG)"/><path d="M611 587 L604 559 L576 563 L577 587Z" fill="url(#baseG)"/><path d="M534 587 L536 563 L556 555 L576 563 L578 587Z" fill="url(#baseG)"/><path d="M536 563 L556 555 L576 563" fill="none" stroke="#c98a48" stroke-width="1"/><path d="M536 563 L534 587 M576 563 L578 587" stroke="#c47c40" stroke-width="1.2"/><path d="M556 567 V580" stroke="#c7924e" stroke-width="1.3"/><circle cx="556" cy="587" r="11.5" fill="none" stroke="#fff" stroke-width="2"/><circle cx="556" cy="587" r="11.5" fill="none" stroke="#e0222e" stroke-width="2" stroke-dasharray="4.5 4.5"/><circle cx="556" cy="587" r="2.8" fill="#f5a623" stroke="#222" stroke-width="0.8"/></svg>
<div class="r" style="left:749.6px;top:62px;width:1px;height:577px;background:rgba(40,34,64,0.45);"></div>
<div class="r" style="left:1056px;top:29px;width:527px;height:610px;background:#2f2f2f;border-radius:6px"></div>
<div class="r" style="left:1066px;top:35px;width:39px;height:22px;background:#282828;border-radius:4px;"></div>
<svg class="r" style="left:1070px;top:37px;" width="22" height="18" viewBox="0 0 22 18"><rect x="2" y="2" width="14" height="14" fill="#e6e6e6"/><path d="M6 6 H9 V9 H6Z M9 9 H12 V12 H9Z M12 6 H15 V9 H12Z M6 12 H9 V15 H6Z M12 12 H15 V15 H12Z M9 3 H12 V6 H9Z" fill="#282828"/></svg>
<svg class="r" style="left:1092px;top:44px;" width="10" height="6" viewBox="0 0 10 6"><path d="M1.5 1.5 L5 4.8 L8.5 1.5" fill="none" stroke="#cfcfcf" stroke-width="1.5" stroke-linecap="round" stroke-linejoin="round"/></svg>
<div class="t " style="left:1120px;top:38.70px;font-size:15.95px;line-height:15.95px;color:#e6e6e6;transform:scaleX(0.9091);transform-origin:0 0;">View</div>
<div class="t " style="left:1171px;top:38.70px;font-size:15.95px;line-height:15.95px;color:#e6e6e6;transform:scaleX(0.9091);transform-origin:0 0;">Image</div>
<div class="r" style="left:1243px;top:35px;width:37px;height:22px;background:#282828;border-radius:4px;"></div>
<svg class="r" style="left:1246px;top:37px;" width="20" height="18" viewBox="0 0 20 18"><path d="M2 2 H16 V16 H2Z" fill="none" stroke="#e6e6e6" stroke-width="1.4"/><path d="M3 16 L8 7 L13 16Z" fill="#e6e6e6"/><circle cx="12" cy="6" r="1.8" fill="#e6e6e6"/></svg>
<svg class="r" style="left:1267px;top:44px;" width="10" height="6" viewBox="0 0 10 6"><path d="M1.5 1.5 L5 4.8 L8.5 1.5" fill="none" stroke="#cfcfcf" stroke-width="1.5" stroke-linecap="round" stroke-linejoin="round"/></svg>
<div class="r" style="left:1280px;top:35px;width:163px;height:22px;background:#1d1d1d;"></div>
<div class="t " style="left:1292px;top:38.70px;font-size:15.95px;line-height:15.95px;color:#e6e6e6;transform:scaleX(0.9091);transform-origin:0 0;">std_FlagPole_mat.png</div>
<div class="r" style="left:1443px;top:35px;width:100px;height:22px;background:#3a3a3a;border-radius:0 4px 4px 0"></div>
<div class="r" style="left:1467.6px;top:35px;width:1px;height:22px;background:#2e2e2e;"></div>
<div class="r" style="left:1492px;top:35px;width:1px;height:22px;background:#2e2e2e;"></div>
<div class="r" style="left:1517px;top:35px;width:1px;height:22px;background:#2e2e2e;"></div>
<svg class="r" style="left:1446px;top:37px;" width="20" height="18" viewBox="0 0 20 18"><path d="M10 2 L16 4 V9 C16 13 13 15 10 16 C7 15 4 13 4 9 V4Z" fill="none" stroke="#8a8a8a" stroke-width="1.4"/></svg>
<svg class="r" style="left:1470px;top:37px;" width="20" height="18" viewBox="0 0 20 18"><path d="M6 5 V2 H13 L16 5 V13 H12 M3 5 H11 V16 H3Z" fill="none" stroke="#cfcfcf" stroke-width="1.4"/></svg>
<svg class="r" style="left:1495px;top:37px;" width="20" height="18" viewBox="0 0 20 18"><path d="M2 4 H8 L10 6 H17 V15 H2Z" fill="#e6e6e6"/><path d="M2 8 H17" stroke="#3a3a3a" stroke-width="1"/></svg>
<svg class="r" style="left:1521px;top:38px;" width="18" height="16" viewBox="0 0 18 16"><path d="M4 3 L14 13 M14 3 L4 13" stroke="#d0d0d0" stroke-width="1.6"/></svg>
<svg class="r" style="left:1552px;top:36px;" width="20" height="20" viewBox="0 0 20 20"><path d="M11 2 L18 9 L15.5 10 L12 13.5 L11.5 17 L3 8.5 L6.5 8 L10 4.5Z" fill="#e6e6e6"/><path d="M6 14 L2 18" stroke="#e6e6e6" stroke-width="1.8"/></svg>
<div class="r" style="left:1065px;top:72px;width:49px;height:83px;background:#282828;border-radius:6px"></div>
<div class="r" style="left:1065px;top:72px;width:49px;height:41px;background:#4772b3;border-radius:6px 6px 0 0"></div>
<svg class="r" style="left:1065px;top:72px;" width="49" height="41" viewBox="0 0 49 41"><path d="M22 10 Q35 6 37 14 Q39 24 33 30 Q30 34 26 30 Q20 26 13 22 Q8 12 22 10Z" fill="none" stroke="#f0b03a" stroke-width="1.6" stroke-dasharray="3 2"/><path d="M20 15 L20 27 L23 24 L27 25Z" fill="#e8e8e8"/><path d="M43 37 L47 37 L47 33Z" fill="#aab"/></svg>
<svg class="r" style="left:1065px;top:113px;" width="49" height="42" viewBox="0 0 49 42"><circle cx="24.5" cy="21" r="12" fill="none" stroke="#e8e8e8" stroke-width="2"/><circle cx="24.5" cy="21" r="12" fill="none" stroke="#b32d3a" stroke-width="2" stroke-dasharray="4 4"/><path d="M24.5 12 V18 M24.5 24 V30 M15.5 21 H21.5 M27.5 21 H33.5" stroke="#9a9a9a" stroke-width="1.4"/></svg>
<div class="r" style="left:1065px;top:164px;width:49px;height:169px;background:#282828;border-radius:6px"></div>
<div class="r" style="left:1065px;top:206px;width:49px;height:1px;background:#363636;"></div>
<div class="r" style="left:1065px;top:249.5px;width:49px;height:1px;background:#363636;"></div>
<div class="r" style="left:1065px;top:291.5px;width:49px;height:1px;background:#363636;"></div>
<svg class="r" style="left:1065px;top:164px;" width="49" height="42" viewBox="0 0 49 42"><path d="M24.5 8 L19.5 14 H29.5Z M24.5 34 L19.5 28 H29.5Z M10 21 L16 16 V26Z M39 21 L33 16 V26Z" fill="#e8e8e8"/><path d="M24.5 15 V19 M24.5 23 V27 M16.5 21 H20.5 M28.5 21 H32.5" stroke="#e8e8e8" stroke-width="1.6"/></svg>
<svg class="r" style="left:1065px;top:206px;" width="49" height="43" viewBox="0 0 49 43"><path d="M12 18 A13 13 0 0 1 37 18 M37 25 A13 13 0 0 1 12 25" fill="none" stroke="#e8e8e8" stroke-width="1.6"/><path d="M24.5 15 L30.5 21 L24.5 27 L18.5 21Z" fill="#e8e8e8"/><path d="M9 19 H16 L12.5 25Z M33 24 H40 L36.5 18Z" fill="#e8e8e8"/></svg>
<svg class="r" style="left:1065px;top:249.5px;" width="49" height="42" viewBox="0 0 49 42"><rect x="14" y="21" width="12" height="12" fill="#e8e8e8"/><path d="M20 18 V10 H35 V26 H29" fill="none" stroke="#e8e8e8" stroke-width="1.4"/><path d="M26 18 L33 11 M28 11 H33 V16" fill="none" stroke="#e8e8e8" stroke-width="1.6"/></svg>
<svg class="r" style="left:1065px;top:291.5px;" width="49" height="42" viewBox="0 0 49 42"><circle cx="24.5" cy="21" r="13" fill="none" stroke="#e8e8e8" stroke-width="1.6" stroke-dasharray="7 4"/><rect x="19.5" y="16" width="10" height="10" fill="#e8e8e8"/><path d="M24.5 6 L21.5 10 H27.5Z M24.5 36 L21.5 32 H27.5Z M10 21 L14 18 V24Z M39 21 L35 18 V24Z" fill="#e8e8e8"/></svg>
<div class="r" style="left:1065px;top:342.5px;width:49px;height:40.5px;background:#282828;border-radius:6px"></div>
<svg class="r" style="left:1065px;top:342.5px;" width="49" height="40" viewBox="0 0 49 40"><path d="M12 25 L29 8 Q31 6 33 8 L34 9 Q36 11 34 13 L17 30 L11 31Z" fill="none" stroke="#e8e8e8" stroke-width="1.7" stroke-linejoin="round"/><path d="M14 28 L15 26" stroke="#e8e8e8" stroke-width="1.5"/><path d="M26 11 L31 16" stroke="#e8e8e8" stroke-width="1.3"/><path d="M10 36 C15 31 20 29 26 31.5 C31 34 35 33 39 28" fill="none" stroke="#5fd19c" stroke-width="1.8"/><path d="M43 36 L47 36 L47 32Z" fill="#aab"/></svg>
<div class="r" style="left:1065px;top:392px;width:49px;height:40px;background:#282828;border-radius:6px"></div>
<svg class="r" style="left:1065px;top:392px;" width="49" height="40" viewBox="0 0 49 40"><path d="M14 16 L22 10 H36 V26 L28 32 H14Z M14 16 H28 V32 M28 16 L36 10" fill="none" stroke="#e8e8e8" stroke-width="1.5"/><path d="M12 24 L28 18" stroke="#b0a0e0" stroke-width="1.3"/><circle cx="12" cy="24" r="2" fill="#c0a0e0"/></svg>
<div class="r" style="left:1539px;top:72.7px;width:32px;height:32px;background:#262626;border-radius:50%"></div>
<svg class="r" style="left:1539px;top:72.7px;" width="32" height="32" viewBox="0 0 32 32"><circle cx="18" cy="13.5" r="7.5" fill="#e8e8e8"/><path d="M18 9.5 V17.5 M14 13.5 H22" stroke="#262626" stroke-width="1.6"/><path d="M12.5 19 L7.5 24" stroke="#e8e8e8" stroke-width="2.8" stroke-linecap="round"/></svg>
<div class="r" style="left:1539px;top:111.6px;width:32px;height:32px;background:#262626;border-radius:50%"></div>
<svg class="r" style="left:1539px;top:111.6px;" width="32" height="32" viewBox="0 0 32 32"><path d="M9.5 15 V9 Q9.5 7.5 11 7.5 Q12.5 7.5 12.5 9 V14 V7 Q12.5 5.5 14 5.5 Q15.5 5.5 15.5 7 V14 V6.5 Q15.5 5 17 5 Q18.5 5 18.5 6.5 V14 V8 Q18.5 6.5 20 6.5 Q21.5 6.5 21.5 8 V17 Q21.5 24 15.5 24 Q11.5 24 9.5 20 L6.5 15 Q6 13.5 7.5 13.5 Q8.5 13.5 9.5 15Z" fill="#e8e8e8"/></svg>
<div class="r" style="left:1573px;top:80px;width:10px;height:18px;background:#2a2a2a;border-radius:4px 0 0 4px"></div>
<svg class="r" style="left:1574px;top:82px;" width="8" height="14" viewBox="0 0 8 14"><path d="M6 3 L2 7 L6 11" fill="none" stroke="#8a8a8a" stroke-width="1.3"/></svg>
<div class="r" style="left:1163px;top:216px;width:325px;height:325px;background:#777;"></div>
<svg class="r" style="left:1164px;top:217px;" width="323" height="323" viewBox="0 0 323 323"><defs><filter id="bl4" x="-30%" y="-30%" width="160%" height="160%"><feGaussianBlur stdDeviation="3.5"/></filter><filter id="bl2" x="-30%" y="-30%" width="160%" height="160%"><feGaussianBlur stdDeviation="1.5"/></filter><radialGradient id="bowlG" cx="0.5" cy="0.15" r="0.85"><stop offset="0" stop-color="#2e6ba6"/><stop offset="0.4" stop-color="#2c62a2"/><stop offset="0.65" stop-color="#294790"/><stop offset="0.85" stop-color="#2a3580"/><stop offset="1" stop-color="#2b3078"/></radialGradient><clipPath id="texC"><rect width="323" height="323"/></clipPath></defs><g clip-path="url(#texC)"><rect width="323" height="323" fill="#bf5d37"/><path d="M0 0 H72 L68 20 L60 45 L30 80 L0 72Z" fill="#efc47a"/><path d="M40 0 H70 L64 24 L50 16Z" fill="#e9a85a"/><g filter="url(#bl4)"><path d="M40 0 Q62 26 88 46 Q70 70 50 100 Q30 74 2 54 Q24 30 40 0Z" fill="#f4e392"/><ellipse cx="46" cy="50" rx="38" ry="40" fill="#f4e392"/><path d="M0 0 H40 L20 40 L0 50Z" fill="#f1d68a"/></g><path d="M102 0 H144 Q150 20 162 46 Q142 72 124 104 Q104 74 82 50 Q96 25 102 0Z" fill="#ebb464"/><g filter="url(#bl4)"><path d="M120 8 Q138 30 156 48 Q140 68 123 96 Q106 70 90 50 Q106 30 120 8Z" fill="#f4e392"/><ellipse cx="123" cy="50" rx="25" ry="30" fill="#f4e392"/></g><path d="M0 68 L20 69 L28 75 L30 82 L30 96 L38 100 L40 152 L102 152 L102 301 L98.5 323 L0 323Z" fill="#2f2961"/><path d="M31.5 96 V190" stroke="#2e5f96" stroke-width="2.4"/><path d="M38 171 V192" stroke="#2e6a9a" stroke-width="1.4"/><circle cx="20" cy="175" r="5" fill="none" stroke="#36347a" stroke-width="1.5"/><circle cx="20" cy="175" r="1.3" fill="#c06050"/><circle cx="17" cy="94" r="1.2" fill="#c06050"/><path d="M0 284 H22" stroke="#c0503a" stroke-width="1.8"/><circle cx="90" cy="171" r="1.3" fill="#d9a0c8"/><circle cx="63" cy="179" r="1.3" fill="#d9a0c8"/><circle cx="84" cy="203" r="1.3" fill="#d9a0c8"/><circle cx="55" cy="213" r="1.3" fill="#d9a0c8"/><circle cx="63" cy="244" r="1.3" fill="#d9a0c8"/><circle cx="87" cy="253" r="1.3" fill="#d9a0c8"/><circle cx="76" cy="278" r="1.3" fill="#d9a0c8"/><circle cx="46" cy="283" r="1.3" fill="#d9a0c8"/><path d="M92 92 H167 V152 H92Z" fill="#c26c40"/><path d="M37 90 H96 V152 H40Z" fill="#ebb565"/><path d="M44.3 105.796 L50.796 99.3 L60.204 99.3 L66.7 105.796 L66.7 115.204 L60.204 121.7 L50.796 121.7 L44.3 115.204Z" fill="#b4522f"/><path d="M68.8 105.796 L75.296 99.3 L84.704 99.3 L91.2 105.796 L91.2 115.204 L84.704 121.7 L75.296 121.7 L68.8 115.204Z" fill="#b4522f"/><path d="M44.3 132.296 L50.796 125.8 L60.204 125.8 L66.7 132.296 L66.7 141.704 L60.204 148.2 L50.796 148.2 L44.3 141.704Z" fill="#b4522f"/><path d="M68.8 132.296 L75.296 125.8 L84.704 125.8 L91.2 132.296 L91.2 141.704 L84.704 148.2 L75.296 148.2 L68.8 141.704Z" fill="#b4522f"/><path d="M37 98 L44 104 L44 118 L37 122Z" fill="#b4522f"/><rect x="92" y="105" width="75" height="15" fill="#edbd6b"/><rect x="92" y="125" width="75" height="17" fill="#edbd6b"/><rect x="92" y="120" width="75" height="5" fill="#b8603a"/><g filter="url(#bl2)"><ellipse cx="146" cy="112" rx="7" ry="5" fill="#f4da88"/><ellipse cx="146" cy="133" rx="7" ry="6" fill="#f4da88"/></g><path d="M102 149 H168 L160 203 H102Z" fill="#c77a45"/><path d="M99 144 Q130 158 166 144 Q152 176 164 206 Q130 194 99 206 Q112 176 99 144Z" fill="#e4a05a"/><path d="M103 149 Q130 163 161 149 Q148 176 159 201 Q130 189 103 201 Q116 176 103 149Z" fill="#b4522f"/><path d="M152 150 H170 L166 205 H154Z" fill="#dd9c58" opacity="0.7"/><path d="M100 200 H121 V323 H98.5Z" fill="#eab060"/><g filter="url(#bl2)"><rect x="104" y="208" width="13" height="50" fill="#f4d67e"/></g><path d="M121 198 H157 V270 L138 284 L121 268Z" fill="#eec06c"/><path d="M123 211.2 L131.7 202.5 L144.3 202.5 L153 211.2 L153 223.8 L144.3 232.5 L131.7 232.5 L123 223.8Z" fill="#b4522f"/><path d="M123 244.2 L131.7 235.5 L144.3 235.5 L153 244.2 L153 256.8 L144.3 265.5 L131.7 265.5 L123 256.8Z" fill="#b4522f"/><path d="M121 268 L138 284 V323 H121Z" fill="#c47a44"/><path d="M121 290 H138 M121 298 H138 M121 306 H138" stroke="#b45a36" stroke-width="1.2"/><path d="M195 0 H305 V14 Q260 18 220 14 Q205 12 195 6Z" fill="#e9a95c"/><path d="M288 0 H310 L300 13Z" fill="#eab060"/><path d="M204 0 H290 V30 L262 30 L270 64 H323 V0Z" fill="#bf5d37"/><path d="M204 0 H302 L298 12 Q280 18 262 16 L240 14 L220 10 L206 6Z" fill="#eab060"/><path d="M206 8 L232 10 L252 22 L272 54 L262 80 L252 90 L236 96 L218 94 L196 84 L180 64 L178 40 L188 20Z" fill="#eec27c"/><path d="M226 20 L248 28 L258 56 L250 74 L236 82 L222 70 L224 46Z" fill="#c9693c"/><path d="M190 62 L222 62 L236 82 L230 92 L206 88 L188 76Z" fill="#c9693c"/><g filter="url(#bl2)"><path d="M190 24 L214 20 L224 40 L216 58 L196 58 L184 42Z" fill="#f2d48c"/><path d="M180 50 L188 50 L186 70 L180 68Z" fill="#f4e090"/><path d="M214 72 L226 74 L228 84 L216 82Z" fill="#eeb468"/></g><path d="M272 63 L323 63 V165 L300 158 L282 142 L270 112 L253 105 Q250 90 256 78 Q262 66 272 63Z" fill="#f4e392"/><path d="M175 104 Q222 100 270 110 L281 130 L282 142 Q262 166 221 169 Q180 166 165 140 L165 122Z" fill="#2b2f76"/><path d="M176 105 Q222 102 268 110 Q276 130 262 148 Q240 160 221 158 Q196 158 180 146 Q168 126 176 105Z" fill="url(#bowlG)"/><path d="M201.7 111 Q202 128.7 221 128.7 Q239 128.7 239.6 111" fill="none" stroke="#e9a85c" stroke-width="1.7"/><path d="M204 90 Q210 84 222 84 Q236 86 240 96 L238 108 L226 106 L220 108 L212 104 L202 110Z" fill="#f5e596"/><path d="M160 146 Q190 170 221 170 Q262 168 286 146 L323 160 V178 Q300 188 264 197 L252 194 L238 188 L223 202 L209 190 L193 197 L178 190 L160 196Z" fill="#b4522f"/><path d="M163 150 Q195 172 221 173 Q258 172 286 146 L292 150 Q262 180 221 181 Q190 180 162 160Z" fill="#efbf6a"/><path d="M286 146 L322 161 V168 L290 162 Z" fill="#e9a860"/><path d="M160 188 L178 184 L193 191.5 L208 185 L224 198 L239.6 187.5 L255 187.5 L264 192 L264 198 L255 194 L239.6 194 L224 204 L208 191 L193 198 L178 191 L160 196Z" fill="#ebb565"/><path d="M322 162.7 Q305 178 286.7 187.5 Q275 193 264.5 196.7 L262 210 H323Z" fill="#2e69a0"/><path d="M157 200 L160 196 L178 191 L193 198 L208 191 L224 204 L239.6 194 L255 194 L264 198 L264 210 L236 210 V323 H138 V284 L157 270Z" fill="#2f2961"/><path d="M236 200 H323 V323 H236Z" fill="#2f2961"/><path d="M319 210 V323" stroke="#4a4a6a" stroke-width="2"/><path d="M237 203 Q275 199 310 203 Q312 218 315 238 Q320 250 316 262 Q318 290 315 312 Q290 318 260 316 Q240 316 238 300 Q236 270 238 250 Q233 225 237 203Z" fill="#eab565"/><path d="M245 209 Q275 206 302 208 Q302 225 307 240 Q309 260 306 280 Q308 295 305 306 Q280 308 252 306 Q246 280 247 260 Q242 230 245 209Z" fill="#2f60a2"/><clipPath id="plC"><ellipse cx="279" cy="258.7" rx="21" ry="21"/></clipPath><g clip-path="url(#plC)"><rect x="250" y="230" width="60" height="60" fill="#efc8d0"/><path d="M254 232 Q262 258 278 288" stroke="#6fd6cc" stroke-width="3.2" fill="none"/><path d="M263 232 Q271 258 287 288" stroke="#6fd6cc" stroke-width="3.2" fill="none"/><path d="M272 232 Q280 258 296 288" stroke="#6fd6cc" stroke-width="3.2" fill="none"/><path d="M281 232 Q289 258 305 288" stroke="#6fd6cc" stroke-width="3.2" fill="none"/></g><path d="M262 225 L293.7 290.4" stroke="#2f60a2" stroke-width="9"/><path d="M262 225 L293.7 290.4" stroke="#9a7bb6" stroke-width="5" stroke-linecap="round"/><circle cx="260" cy="218.6" r="0.9" fill="#dde"/><circle cx="255.4" cy="241.5" r="0.9" fill="#dde"/><circle cx="304" cy="251" r="0.9" fill="#dde"/><circle cx="278" cy="293" r="0.9" fill="#dde"/><circle cx="270" cy="298" r="0.9" fill="#dde"/></g></svg>
<svg class="r" style="left:1136px;top:512px;" width="55" height="55" viewBox="0 0 55 55"><path d="M27.5 0 V55 M0 27.5 H55" stroke="#111" stroke-width="1.3"/><circle cx="27.5" cy="27.5" r="11.5" fill="none" stroke="#fff" stroke-width="1.8"/><circle cx="27.5" cy="27.5" r="11.5" fill="none" stroke="#e0222e" stroke-width="1.8" stroke-dasharray="4.5 4.5"/></svg>
<div class="r" style="left:1586px;top:29px;width:328px;height:301px;background:#282828;border-radius:6px"></div>
<div class="r" style="left:1586px;top:29px;width:328px;height:32px;background:#2b2b2b;border-radius:6px 6px 0 0"></div>
<div class="r" style="left:1586px;top:93px;width:328px;height:25px;background:#2b2b2b;"></div>
<div class="r" style="left:1586px;top:143px;width:328px;height:25px;background:#2b2b2b;"></div>
<div class="r" style="left:1586px;top:193px;width:328px;height:25px;background:#2b2b2b;"></div>
<div class="r" style="left:1586px;top:243px;width:328px;height:25px;background:#2b2b2b;"></div>
<div class="r" style="left:1586px;top:293px;width:328px;height:25px;background:#2b2b2b;"></div>
<div class="r" style="left:1597px;top:34px;width:38px;height:23px;background:#282828;border-radius:4px;"></div>
<svg class="r" style="left:1600px;top:36px;" width="22" height="20" viewBox="0 0 22 20"><rect x="2" y="2" width="6" height="3" fill="#e6e6e6"/><path d="M4 5 V14 H9 M4 9 H9" fill="none" stroke="#bbb" stroke-width="1"/><rect x="9" y="7.5" width="9" height="3.5" fill="#e6e6e6"/><rect x="9" y="12.5" width="9" height="3.5" fill="#e6e6e6"/></svg>
<svg class="r" style="left:1623px;top:43px;" width="10" height="6" viewBox="0 0 10 6"><path d="M1.5 1.5 L5 4.8 L8.5 1.5" fill="none" stroke="#cfcfcf" stroke-width="1.5" stroke-linecap="round" stroke-linejoin="round"/></svg>
<div class="r" style="left:1642px;top:34px;width:39px;height:23px;background:#282828;border-radius:4px;"></div>
<svg class="r" style="left:1645px;top:36px;" width="24" height="20" viewBox="0 0 24 20"><path d="M3 6 V17 H15 M5.5 4 V15 H17" fill="none" stroke="#d8d8d8" stroke-width="1.4"/><path d="M8 2 H19 V13 H8Z" fill="#d8d8d8"/><path d="M9 12 L12 8 L14 10 L16 7 L18 12Z" fill="#2b2b2b"/></svg>
<svg class="r" style="left:1669px;top:43px;" width="10" height="6" viewBox="0 0 10 6"><path d="M1.5 1.5 L5 4.8 L8.5 1.5" fill="none" stroke="#cfcfcf" stroke-width="1.5" stroke-linecap="round" stroke-linejoin="round"/></svg>
<div class="r" style="left:1701px;top:33px;width:145px;height:23px;background:#1d1d1d;border-radius:5px"></div>
<svg class="r" style="left:1707px;top:36px;" width="18" height="18" viewBox="0 0 18 18"><circle cx="11" cy="7" r="5" fill="none" stroke="#e6e6e6" stroke-width="1.6"/><path d="M7.5 10.5 L2 16" stroke="#e6e6e6" stroke-width="1.8"/></svg>
<div class="r" style="left:1866px;top:34px;width:39px;height:23px;background:#282828;border-radius:4px;"></div>
<svg class="r" style="left:1869px;top:36px;" width="20" height="18" viewBox="0 0 20 18"><path d="M2 2 H17 L11 9 V16 L8 14 V9Z" fill="none" stroke="#e6e6e6" stroke-width="1.5"/></svg>
<svg class="r" style="left:1892px;top:43px;" width="10" height="6" viewBox="0 0 10 6"><path d="M1.5 1.5 L5 4.8 L8.5 1.5" fill="none" stroke="#cfcfcf" stroke-width="1.5" stroke-linecap="round" stroke-linejoin="round"/></svg>
<svg class="r" style="left:1615px;top:67px;" width="18" height="16" viewBox="0 0 18 16"><rect x="0.5" y="0.5" width="17" height="4" fill="#e6e6e6"/><path d="M1.5 6 H16.5 V15.5 H1.5Z" fill="#e6e6e6"/><rect x="6" y="8" width="6" height="1.8" fill="#282828"/></svg>
<div class="t " style="left:1641.4px;top:68.20px;font-size:15.95px;line-height:15.95px;color:#e0e0e0;transform:scaleX(0.9091);transform-origin:0 0;">Scene Collection</div>
<svg class="r" style="left:1617.7px;top:96.7px;" width="10" height="8" viewBox="0 0 10 8"><path d="M1 1 H9 L5 7Z" fill="#cfcfcf"/></svg>
<div class="t " style="left:1666.3px;top:93.40px;font-size:15.95px;line-height:15.95px;color:#e0e0e0;transform:scaleX(0.9091);transform-origin:0 0;">Collection</div>
<svg class="r" style="left:1642.6px;top:121.69999999999999px;" width="10" height="8" viewBox="0 0 10 8"><path d="M1 1 H9 L5 7Z" fill="#cfcfcf"/></svg>
<div class="t " style="left:1691.2px;top:118.40px;font-size:15.95px;line-height:15.95px;color:#e0e0e0;transform:scaleX(0.9091);transform-origin:0 0;">FLAG POLE</div>
<svg class="r" style="left:1640px;top:92px;" width="18" height="16" viewBox="0 0 18 16"><rect x="0.5" y="0.5" width="17" height="4" fill="#e6e6e6"/><path d="M1.5 6 H16.5 V15.5 H1.5Z" fill="#e6e6e6"/><rect x="6" y="8" width="6" height="1.8" fill="#282828"/></svg>
<div class="r" style="left:1662px;top:118px;width:24px;height:24px;background:#4a4a4a;border-radius:5px"></div>
<svg class="r" style="left:1665px;top:122px;" width="18" height="16" viewBox="0 0 18 16"><rect x="0.5" y="0.5" width="17" height="4" fill="#e6e6e6"/><path d="M1.5 6 H16.5 V15.5 H1.5Z" fill="#e6e6e6"/><rect x="6" y="8" width="6" height="1.8" fill="#282828"/></svg>
<div class="r" style="left:1687px;top:143px;width:24px;height:24px;background:#4a4a4a;border-radius:5px"></div>
<svg class="r" style="left:1668px;top:145.7px;" width="9" height="10" viewBox="0 0 9 10"><path d="M1 1 V9 L8 5Z" fill="#cfcfcf"/></svg>
<svg class="r" style="left:1690px;top:142.7px;" width="18" height="18" viewBox="0 0 18 18"><path d="M2 2 H16 L9 16Z" fill="none" stroke="#e8893c" stroke-width="2.6" stroke-linejoin="round"/><path d="M6 5 H12 L9 11Z" fill="#e8893c" opacity="0.25"/></svg>
<div class="t " style="left:1716px;top:143.40px;font-size:15.95px;line-height:15.95px;color:#e0e0e0;transform:scaleX(0.9091);transform-origin:0 0;">Pole</div>
<svg class="r" style="left:1773px;top:141.7px;" width="20" height="18" viewBox="0 0 20 18"><path d="M3 3 H17 L10 15Z" fill="none" stroke="#19b89a" stroke-width="1.5"/><rect x="1" y="1" width="4" height="4" fill="#282828" stroke="#19b89a" stroke-width="1.3"/><rect x="15" y="1" width="4" height="4" fill="#282828" stroke="#19b89a" stroke-width="1.3"/><rect x="8" y="13" width="4" height="4" fill="#282828" stroke="#19b89a" stroke-width="1.3"/></svg>
<svg class="r" style="left:1668px;top:170.7px;" width="9" height="10" viewBox="0 0 9 10"><path d="M1 1 V9 L8 5Z" fill="#cfcfcf"/></svg>
<svg class="r" style="left:1690px;top:167.7px;" width="18" height="18" viewBox="0 0 18 18"><path d="M2 2 H16 L9 16Z" fill="none" stroke="#e8893c" stroke-width="2.6" stroke-linejoin="round"/><path d="M6 5 H12 L9 11Z" fill="#e8893c" opacity="0.25"/></svg>
<div class="t " style="left:1716px;top:168.40px;font-size:15.95px;line-height:15.95px;color:#e0e0e0;transform:scaleX(0.9091);transform-origin:0 0;">Star</div>
<svg class="r" style="left:1773px;top:166.7px;" width="20" height="18" viewBox="0 0 20 18"><path d="M3 3 H17 L10 15Z" fill="none" stroke="#19b89a" stroke-width="1.5"/><rect x="1" y="1" width="4" height="4" fill="#282828" stroke="#19b89a" stroke-width="1.3"/><rect x="15" y="1" width="4" height="4" fill="#282828" stroke="#19b89a" stroke-width="1.3"/><rect x="8" y="13" width="4" height="4" fill="#282828" stroke="#19b89a" stroke-width="1.3"/></svg>
<svg class="r" style="left:1643px;top:195.7px;" width="9" height="10" viewBox="0 0 9 10"><path d="M1 1 V9 L8 5Z" fill="#cfcfcf"/></svg>
<svg class="r" style="left:1663px;top:192px;" width="22" height="18" viewBox="0 0 22 18"><circle cx="6" cy="5" r="4" fill="#e8893c"/><circle cx="13" cy="5" r="4" fill="#e8893c"/><rect x="3" y="8" width="13" height="8" fill="#e8893c"/><path d="M16 10 L21 8 V16 L16 14Z" fill="#e8893c"/></svg>
<div class="t " style="left:1691.2px;top:193.40px;font-size:15.95px;line-height:15.95px;color:#e0e0e0;transform:scaleX(0.9091);transform-origin:0 0;">Camera</div>
<div class="r" style="left:1767px;top:193px;width:25px;height:24px;background:#4a4a4a;border-radius:5px"></div>
<svg class="r" style="left:1769px;top:196px;" width="22" height="18" viewBox="0 0 22 18"><circle cx="7" cy="5" r="4" fill="none" stroke="#19b89a" stroke-width="1.4"/><circle cx="14" cy="5" r="4" fill="none" stroke="#19b89a" stroke-width="1.4"/><rect x="3" y="9" width="13" height="7" fill="none" stroke="#19b89a" stroke-width="1.4"/><path d="M16 11 L20 9 V16 L16 14Z" fill="none" stroke="#19b89a" stroke-width="1.3"/></svg>
<svg class="r" style="left:1643px;top:220.7px;" width="9" height="10" viewBox="0 0 9 10"><path d="M1 1 V9 L8 5Z" fill="#cfcfcf"/></svg>
<svg class="r" style="left:1665px;top:217px;" width="18" height="20" viewBox="0 0 18 20"><circle cx="9" cy="7" r="6.5" fill="#e8893c"/><rect x="5.5" y="12" width="7" height="5" fill="#e8893c"/><path d="M6 7 L9 10 L12 7" stroke="#282828" stroke-width="1" fill="none"/><rect x="6.5" y="18" width="5" height="1.5" fill="#e8893c"/></svg>
<div class="t " style="left:1691.2px;top:218.40px;font-size:15.95px;line-height:15.95px;color:#e0e0e0;transform:scaleX(0.9091);transform-origin:0 0;">Light</div>
<svg class="r" style="left:1752px;top:217px;" width="18" height="18" viewBox="0 0 18 18"><path d="M5 15 A7 7 0 1 1 13 15" fill="none" stroke="#19b89a" stroke-width="1.4"/><circle cx="9" cy="8" r="2.5" fill="none" stroke="#19b89a" stroke-width="1.3"/><path d="M9 11 V17" stroke="#19b89a" stroke-width="1.3" stroke-dasharray="2 1.5"/></svg>
<svg class="r" style="left:1837px;top:93px;" width="14" height="14" viewBox="0 0 14 14"><rect x="0" y="0" width="14" height="14" rx="2.5" fill="#e6e6e6"/><path d="M3 7.5 L6 10.5 L11.5 3.5" fill="none" stroke="#222" stroke-width="2"/></svg>
<svg class="r" style="left:1837px;top:118px;" width="14" height="14" viewBox="0 0 14 14"><rect x="0" y="0" width="14" height="14" rx="2.5" fill="#e6e6e6"/><path d="M3 7.5 L6 10.5 L11.5 3.5" fill="none" stroke="#222" stroke-width="2"/></svg>
<svg class="r" style="left:1859px;top:93.7px;" width="18" height="14" viewBox="0 0 18 14"><path d="M1 7 C5 1 13 1 17 7 C13 13 5 13 1 7Z" fill="#e6e6e6"/><circle cx="9" cy="7" r="3.2" fill="#282828"/><circle cx="9" cy="7" r="1.6" fill="#e6e6e6"/></svg>
<svg class="r" style="left:1884px;top:92.7px;" width="18" height="16" viewBox="0 0 18 16"><path d="M1 4 H5 L7 1.5 H11 L13 4 H17 V15 H1Z" fill="#e6e6e6"/><circle cx="9" cy="9.5" r="4" fill="#282828"/><circle cx="9" cy="9.5" r="2.4" fill="#e6e6e6"/></svg>
<svg class="r" style="left:1859px;top:118.69999999999999px;" width="18" height="14" viewBox="0 0 18 14"><path d="M1 7 C5 1 13 1 17 7 C13 13 5 13 1 7Z" fill="#e6e6e6"/><circle cx="9" cy="7" r="3.2" fill="#282828"/><circle cx="9" cy="7" r="1.6" fill="#e6e6e6"/></svg>
<svg class="r" style="left:1884px;top:117.69999999999999px;" width="18" height="16" viewBox="0 0 18 16"><path d="M1 4 H5 L7 1.5 H11 L13 4 H17 V15 H1Z" fill="#e6e6e6"/><circle cx="9" cy="9.5" r="4" fill="#282828"/><circle cx="9" cy="9.5" r="2.4" fill="#e6e6e6"/></svg>
<svg class="r" style="left:1859px;top:143.7px;" width="18" height="14" viewBox="0 0 18 14"><path d="M1 7 C5 1 13 1 17 7 C13 13 5 13 1 7Z" fill="#e6e6e6"/><circle cx="9" cy="7" r="3.2" fill="#282828"/><circle cx="9" cy="7" r="1.6" fill="#e6e6e6"/></svg>
<svg class="r" style="left:1884px;top:142.7px;" width="18" height="16" viewBox="0 0 18 16"><path d="M1 4 H5 L7 1.5 H11 L13 4 H17 V15 H1Z" fill="#e6e6e6"/><circle cx="9" cy="9.5" r="4" fill="#282828"/><circle cx="9" cy="9.5" r="2.4" fill="#e6e6e6"/></svg>
<svg class="r" style="left:1859px;top:168.7px;" width="18" height="14" viewBox="0 0 18 14"><path d="M1 7 C5 1 13 1 17 7 C13 13 5 13 1 7Z" fill="#e6e6e6"/><circle cx="9" cy="7" r="3.2" fill="#282828"/><circle cx="9" cy="7" r="1.6" fill="#e6e6e6"/></svg>
<svg class="r" style="left:1884px;top:167.7px;" width="18" height="16" viewBox="0 0 18 16"><path d="M1 4 H5 L7 1.5 H11 L13 4 H17 V15 H1Z" fill="#e6e6e6"/><circle cx="9" cy="9.5" r="4" fill="#282828"/><circle cx="9" cy="9.5" r="2.4" fill="#e6e6e6"/></svg>
<svg class="r" style="left:1859px;top:193.7px;" width="18" height="14" viewBox="0 0 18 14"><path d="M1 7 C5 1 13 1 17 7 C13 13 5 13 1 7Z" fill="#e6e6e6"/><circle cx="9" cy="7" r="3.2" fill="#282828"/><circle cx="9" cy="7" r="1.6" fill="#e6e6e6"/></svg>
<svg class="r" style="left:1884px;top:192.7px;" width="18" height="16" viewBox="0 0 18 16"><path d="M1 4 H5 L7 1.5 H11 L13 4 H17 V15 H1Z" fill="#e6e6e6"/><circle cx="9" cy="9.5" r="4" fill="#282828"/><circle cx="9" cy="9.5" r="2.4" fill="#e6e6e6"/></svg>
<svg class="r" style="left:1859px;top:218.7px;" width="18" height="14" viewBox="0 0 18 14"><path d="M1 7 C5 1 13 1 17 7 C13 13 5 13 1 7Z" fill="#e6e6e6"/><circle cx="9" cy="7" r="3.2" fill="#282828"/><circle cx="9" cy="7" r="1.6" fill="#e6e6e6"/></svg>
<svg class="r" style="left:1884px;top:217.7px;" width="18" height="16" viewBox="0 0 18 16"><path d="M1 4 H5 L7 1.5 H11 L13 4 H17 V15 H1Z" fill="#e6e6e6"/><circle cx="9" cy="9.5" r="4" fill="#282828"/><circle cx="9" cy="9.5" r="2.4" fill="#e6e6e6"/></svg>
<div class="r" style="left:1621.5px;top:119px;width:1px;height:112px;background:#555;"></div>
<div class="r" style="left:1646.5px;top:144px;width:1px;height:37px;background:#555;"></div>
<div class="r" style="left:1586px;top:334px;width:328px;height:637px;background:#2e2e2e;border-radius:6px"></div>
<div class="r" style="left:1586px;top:334px;width:328px;height:30px;background:#2b2b2b;border-radius:6px 6px 0 0"></div>
<div class="r" style="left:1586px;top:364px;width:35px;height:607px;background:#1f1f1f;border-radius:0 0 0 6px"></div>
<div class="r" style="left:1597px;top:338px;width:38px;height:23px;background:#282828;border-radius:4px;"></div>
<svg class="r" style="left:1599px;top:340px;" width="24" height="20" viewBox="0 0 24 20"><rect x="2" y="2" width="16" height="7" rx="3.5" fill="#e6e6e6"/><rect x="9" y="3.5" width="8" height="4" rx="2" fill="#222"/><rect x="2" y="11" width="16" height="7" rx="3.5" fill="#e6e6e6"/><rect x="12" y="12.5" width="5" height="4" rx="2" fill="#222"/></svg>
<svg class="r" style="left:1623px;top:346px;" width="10" height="6" viewBox="0 0 10 6"><path d="M1.5 1.5 L5 4.8 L8.5 1.5" fill="none" stroke="#cfcfcf" stroke-width="1.5" stroke-linecap="round" stroke-linejoin="round"/></svg>
<div class="r" style="left:1674px;top:338px;width:144px;height:23px;background:#1d1d1d;border-radius:5px"></div>
<svg class="r" style="left:1678px;top:341px;" width="18" height="18" viewBox="0 0 18 18"><circle cx="11" cy="7" r="5" fill="none" stroke="#e6e6e6" stroke-width="1.6"/><path d="M7.5 10.5 L2 16" stroke="#e6e6e6" stroke-width="1.8"/></svg>
<div class="r" style="left:1882px;top:338px;width:24px;height:23px;background:#282828;border-radius:4px;"></div>
<svg class="r" style="left:1889px;top:347px;" width="10" height="6" viewBox="0 0 10 6"><path d="M1.5 1.5 L5 4.8 L8.5 1.5" fill="none" stroke="#cfcfcf" stroke-width="1.5" stroke-linecap="round" stroke-linejoin="round"/></svg>
<div class="r" style="left:1589px;top:857px;width:32px;height:34px;background:#333;border-radius:6px 0 0 6px"></div>
<svg class="r" style="left:1594px;top:382.3px;" width="20" height="20" viewBox="0 0 20 20"><path d="M4 9 V16 M4 4 V7 M2 8 H6 M12 3 Q9 3 9 6 Q9 9 12 9 V17 H14 V9 Q17 9 17 6 Q17 3 14 3 V6 H12Z" fill="#e0e0e0" stroke="#e0e0e0" stroke-width="1"/></svg>
<svg class="r" style="left:1594px;top:426px;" width="20" height="20" viewBox="0 0 20 20"><rect x="2" y="5" width="16" height="12" rx="1" fill="none" stroke="#e0e0e0" stroke-width="1.6"/><path d="M6 5 V2 H14 V5" fill="none" stroke="#e0e0e0" stroke-width="1.5"/><rect x="4" y="8" width="10" height="7" fill="#e0e0e0"/></svg>
<svg class="r" style="left:1594px;top:461px;" width="20" height="20" viewBox="0 0 20 20"><path d="M2 3 H18 V10 H2Z" fill="#e0e0e0"/><path d="M4 10 V17 H16 V10" fill="none" stroke="#e0e0e0" stroke-width="1.6"/><path d="M6 15 L10 11 L14 15Z" fill="#e0e0e0"/></svg>
<svg class="r" style="left:1594px;top:496px;" width="20" height="20" viewBox="0 0 20 20"><path d="M3 6 V17 H14 M5.5 4 V15 H16" fill="none" stroke="#e0e0e0" stroke-width="1.4"/><path d="M8 2 H18 V12 H8Z" fill="#e0e0e0"/></svg>
<svg class="r" style="left:1594px;top:531px;" width="20" height="20" viewBox="0 0 20 20"><path d="M6 15 C2 15 2 11 4 8 L8 2 L12 8 C14 11 13 15 9 15Z" fill="#e0e0e0"/><circle cx="15" cy="5" r="2.2" fill="#e0e0e0"/><circle cx="14" cy="14" r="4" fill="#1f1f1f" stroke="#e0e0e0" stroke-width="1.5"/></svg>
<svg class="r" style="left:1594px;top:566px;" width="20" height="20" viewBox="0 0 20 20"><circle cx="10" cy="10" r="7.5" fill="none" stroke="#d9545c" stroke-width="1.8"/><path d="M4 6 Q8 8 7 11 Q10 13 9 17 M12 3 Q11 7 15 8 Q17 11 14 14" fill="none" stroke="#d9545c" stroke-width="1.8"/></svg>
<svg class="r" style="left:1594px;top:611px;" width="20" height="20" viewBox="0 0 20 20"><rect x="2" y="2" width="16" height="4" fill="#e0e0e0"/><path d="M3 7 H17 V17 H3Z" fill="none" stroke="#e0e0e0" stroke-width="1.6"/><rect x="7" y="9" width="6" height="2" fill="#e0e0e0"/></svg>
<svg class="r" style="left:1594px;top:654.8px;" width="20" height="20" viewBox="0 0 20 20"><path d="M2 6 V2 H6 M14 2 H18 V6 M18 14 V18 H14 M6 18 H2 V14" fill="none" stroke="#b8804a" stroke-width="1.2"/><rect x="5" y="5" width="10" height="10" fill="#d48a4c"/></svg>
<svg class="r" style="left:1594px;top:689px;" width="20" height="20" viewBox="0 0 20 20"><path d="M3.5 16.5 L10 10" stroke="#4a7dd0" stroke-width="3.2" stroke-linecap="round"/><path d="M9 11 Q7 6 11 3.5 Q13.5 2.5 15.5 3 L12.5 6 L14 8 L17 5 Q17.8 8.5 15.5 10.5 Q12.5 12.5 9 11Z" fill="#4a7dd0"/></svg>
<svg class="r" style="left:1594px;top:724.5px;" width="20" height="20" viewBox="0 0 20 20"><circle cx="4" cy="4" r="2.5" fill="#4a7dd0"/><circle cx="16" cy="9" r="2.5" fill="#4a7dd0"/><circle cx="15" cy="17" r="2.5" fill="#4a7dd0"/><path d="M4 4 V17 M4 4 L16 9 M4 4 L15 17" stroke="#4a7dd0" stroke-width="1.6"/></svg>
<svg class="r" style="left:1594px;top:758.6px;" width="20" height="20" viewBox="0 0 20 20"><circle cx="11" cy="10" r="3.5" fill="#4a7dd0"/><path d="M17 5 A8 8 0 1 0 17 15" fill="none" stroke="#4a7dd0" stroke-width="2"/></svg>
<svg class="r" style="left:1594px;top:794px;" width="20" height="20" viewBox="0 0 20 20"><path d="M3 14 Q1 8 7 5 L15 2 Q19 2 18 6 L15 13 Q11 19 5 17Z" fill="none" stroke="#4a7dd0" stroke-width="1.8"/><circle cx="9" cy="11" r="3.5" fill="none" stroke="#4a7dd0" stroke-width="1.8"/><circle cx="9" cy="11" r="1" fill="#4a7dd0"/></svg>
<svg class="r" style="left:1594px;top:829px;" width="20" height="20" viewBox="0 0 20 20"><path d="M3 3 H17 L10 16Z" fill="none" stroke="#19b89a" stroke-width="1.5"/><rect x="1" y="1" width="4" height="4" fill="#1f1f1f" stroke="#19b89a" stroke-width="1.3"/><rect x="15" y="1" width="4" height="4" fill="#1f1f1f" stroke="#19b89a" stroke-width="1.3"/><rect x="8" y="14" width="4" height="4" fill="#1f1f1f" stroke="#19b89a" stroke-width="1.3"/></svg>
<svg class="r" style="left:1594px;top:864.5px;" width="20" height="20" viewBox="0 0 20 20"><circle cx="10" cy="10" r="8" fill="#dc6a72"/><path d="M10 10 V2 A8 8 0 0 1 18 10Z" fill="#2a2022"/><path d="M10 2 V18 M2 10 H18" stroke="#f4d0d0" stroke-width="1.1"/><circle cx="10" cy="10" r="8" fill="none" stroke="#f0b0b0" stroke-width="1"/></svg>
<svg class="r" style="left:1594px;top:908.7px;" width="20" height="20" viewBox="0 0 20 20"><path d="M2 2 H18 V18 H2Z" fill="#d9545c"/><path d="M2 2 H6 V6 H2Z M10 2 H14 V6 H10Z M6 6 H10 V10 H6Z M14 6 H18 V10 H14Z M2 10 H6 V14 H2Z M10 10 H14 V14 H10Z M6 14 H10 V18 H6Z M14 14 H18 V18 H14Z" fill="#1f1f1f"/></svg>
<svg class="r" style="left:1634px;top:383px;" width="20" height="18" viewBox="0 0 20 18"><path d="M2 6 V2 H6 M12 2 H16 V6 M16 12 V16 H12 M6 16 H2 V12" fill="none" stroke="#cfcfcf" stroke-width="1.3"/><rect x="5" y="5" width="8" height="8" fill="#e6e6e6"/></svg>
<div class="t " style="left:1662.9px;top:380.00px;font-size:15.95px;line-height:15.95px;color:#e6e6e6;transform:scaleX(0.9091);transform-origin:0 0;">Pole</div>
<svg class="r" style="left:1705px;top:381px;" width="10" height="14" viewBox="0 0 10 14"><path d="M2 2 L8 7 L2 12" fill="none" stroke="#cfcfcf" stroke-width="1.5"/></svg>
<svg class="r" style="left:1725px;top:378px;" width="18" height="18" viewBox="0 0 18 18"><circle cx="9.0" cy="9.0" r="8.0" fill="#e8e8e8"/><path d="M9.0 9.0 V1 A8.0 8.0 0 0 0 1 9.0Z" fill="#1d1d1d"/><path d="M9.0 9.0 H17 A8.0 8.0 0 0 1 9.0 17Z" fill="#1d1d1d"/><circle cx="9.0" cy="9.0" r="8.0" fill="none" stroke="#e8e8e8" stroke-width="1.3"/></svg>
<div class="t " style="left:1754px;top:380.00px;font-size:15.95px;line-height:15.95px;color:#e6e6e6;transform:scaleX(0.9091);transform-origin:0 0;">std_FlagPole_...</div>
<svg class="r" style="left:1884px;top:377px;" width="22" height="22" viewBox="0 0 22 22"><path d="M12 2 L19 9 L16.5 10 L13 13.5 L12.5 17 L4 8.5 L7.5 8 L11 4.5Z" fill="none" stroke="#8a8a8a" stroke-width="1.4"/><path d="M7 14 L3 18" stroke="#8a8a8a" stroke-width="1.6"/></svg>
<div class="r" style="left:1632px;top:421px;width:240px;height:97px;background:#242424;border-radius:5px"></div>
<div class="r" style="left:1638px;top:427px;width:228px;height:23px;background:#4772b3;border-radius:4px"></div>
<svg class="r" style="left:1642px;top:430px;" width="18" height="18" viewBox="0 0 18 18"><circle cx="9" cy="9" r="8" fill="#c85a2e"/><path d="M4 12 Q9 4 15 6 Q14 14 8 16Z" fill="#f0b860"/><path d="M12 3 Q17 8 15 14" stroke="#2a4a8a" stroke-width="2.5" fill="none"/></svg>
<div class="t " style="left:1669px;top:429.70px;font-size:15.95px;line-height:15.95px;color:#fff;transform:scaleX(0.9091);transform-origin:0 0;">std_FlagPole_mat</div>
<svg class="r" style="left:1644px;top:501px;" width="10" height="10" viewBox="0 0 10 10"><path d="M1 1 V9 L8 5Z" fill="#aaa"/></svg>
<svg class="r" style="left:1756px;top:502px;" width="16" height="8" viewBox="0 0 16 8"><g fill="#999"><rect x="1" y="1" width="2" height="2"/><rect x="5" y="1" width="2" height="2"/><rect x="9" y="1" width="2" height="2"/><rect x="13" y="1" width="2" height="2"/><rect x="1" y="5" width="2" height="2"/><rect x="5" y="5" width="2" height="2"/><rect x="9" y="5" width="2" height="2"/><rect x="13" y="5" width="2" height="2"/></g></svg>
<div class="r" style="left:1884px;top:421px;width:23px;height:47px;background:#4a4a4a;border-radius:5px"></div>
<div class="r" style="left:1884px;top:444.5px;width:23px;height:1px;background:#3a3a3a;"></div>
<svg class="r" style="left:1884px;top:421px;" width="23" height="47" viewBox="0 0 23 47"><path d="M11.5 5 V17 M5.5 11 H17.5 M5.5 35 H17.5" stroke="#e0e0e0" stroke-width="1.5"/></svg>
<div class="r" style="left:1884px;top:478px;width:23px;height:23px;background:#282828;border-radius:4px;"></div>
<svg class="r" style="left:1890.5px;top:486.5px;" width="10" height="6" viewBox="0 0 10 6"><path d="M1.5 1.5 L5 4.8 L8.5 1.5" fill="none" stroke="#cfcfcf" stroke-width="1.5" stroke-linecap="round" stroke-linejoin="round"/></svg>
<div class="r" style="left:1632px;top:526px;width:39px;height:23px;background:#282828;border-radius:4px;"></div>
<svg class="r" style="left:1636px;top:528.5px;" width="18" height="18" viewBox="0 0 18 18"><circle cx="9.0" cy="9.0" r="8.0" fill="#e8e8e8"/><path d="M9.0 9.0 V1 A8.0 8.0 0 0 0 1 9.0Z" fill="#1d1d1d"/><path d="M9.0 9.0 H17 A8.0 8.0 0 0 1 9.0 17Z" fill="#1d1d1d"/><circle cx="9.0" cy="9.0" r="8.0" fill="none" stroke="#e8e8e8" stroke-width="1.3"/></svg>
<svg class="r" style="left:1656px;top:535px;" width="10" height="6" viewBox="0 0 10 6"><path d="M1.5 1.5 L5 4.8 L8.5 1.5" fill="none" stroke="#cfcfcf" stroke-width="1.5" stroke-linecap="round" stroke-linejoin="round"/></svg>
<div class="r" style="left:1671px;top:526px;width:82px;height:23px;background:#1d1d1d;"></div>
<div class="t " style="left:1680px;top:529.70px;font-size:15.95px;line-height:15.95px;color:#e6e6e6;transform:scaleX(0.9091);transform-origin:0 0;">std_Flag...</div>
<div class="r" style="left:1753px;top:526px;width:104px;height:23px;background:#3d3d3d;border-radius:0 4px 4px 0"></div>
<div class="r" style="left:1782px;top:526px;width:1px;height:23px;background:#2e2e2e;"></div>
<div class="r" style="left:1807px;top:526px;width:1px;height:23px;background:#2e2e2e;"></div>
<div class="r" style="left:1832px;top:526px;width:1px;height:23px;background:#2e2e2e;"></div>
<div class="t " style="left:1762px;top:529.70px;font-size:15.95px;line-height:15.95px;color:#e6e6e6;transform:scaleX(0.9091);transform-origin:0 0;">2</div>
<svg class="r" style="left:1785px;top:528px;" width="20" height="18" viewBox="0 0 20 18"><path d="M10 2 L16 4 V9 C16 13 13 15 10 16 C7 15 4 13 4 9 V4Z" fill="none" stroke="#9a9a9a" stroke-width="1.4"/></svg>
<svg class="r" style="left:1810px;top:528px;" width="20" height="18" viewBox="0 0 20 18"><path d="M6 5 V2 H13 L16 5 V13 H12 M3 5 H11 V16 H3Z" fill="none" stroke="#cfcfcf" stroke-width="1.4"/></svg>
<svg class="r" style="left:1836px;top:529px;" width="18" height="16" viewBox="0 0 18 16"><path d="M4 3 L14 13 M14 3 L4 13" stroke="#d0d0d0" stroke-width="1.6"/></svg>
<div class="r" style="left:1869px;top:526px;width:38px;height:23px;background:#282828;border-radius:4px;"></div>
<svg class="r" style="left:1871px;top:528px;" width="20" height="18" viewBox="0 0 20 18"><path d="M3 3 H16 L9.5 15Z" fill="none" stroke="#e6e6e6" stroke-width="1.4"/><rect x="1" y="1" width="4" height="4" fill="#282828" stroke="#e6e6e6" stroke-width="1.2"/><rect x="14" y="1" width="4" height="4" fill="#282828" stroke="#e6e6e6" stroke-width="1.2"/><rect x="7.5" y="13" width="4" height="4" fill="#282828" stroke="#e6e6e6" stroke-width="1.2"/></svg>
<svg class="r" style="left:1894px;top:535px;" width="10" height="6" viewBox="0 0 10 6"><path d="M1.5 1.5 L5 4.8 L8.5 1.5" fill="none" stroke="#cfcfcf" stroke-width="1.5" stroke-linecap="round" stroke-linejoin="round"/></svg>
<div class="r" style="left:1631px;top:562px;width:276px;height:31px;background:#3a3a3a;border-radius:5px"></div>
<svg class="r" style="left:1643px;top:570px;" width="8" height="14" viewBox="0 0 8 14"><path d="M2 2 L6 7 L2 12" fill="none" stroke="#cfcfcf" stroke-width="1.4"/></svg>
<div class="t " style="left:1658px;top:570.00px;font-size:15.95px;line-height:15.95px;color:#e6e6e6;transform:scaleX(0.9091);transform-origin:0 0;">Preview</div>
<svg class="r" style="left:1884px;top:573px;" width="16" height="8" viewBox="0 0 16 8"><g fill="#aaa"><rect x="1" y="1" width="2" height="2"/><rect x="5" y="1" width="2" height="2"/><rect x="9" y="1" width="2" height="2"/><rect x="13" y="1" width="2" height="2"/><rect x="1" y="5" width="2" height="2"/><rect x="5" y="5" width="2" height="2"/><rect x="9" y="5" width="2" height="2"/><rect x="13" y="5" width="2" height="2"/></g></svg>
<div class="r" style="left:1631px;top:596px;width:276px;height:348px;background:#3a3a3a;border-radius:5px"></div>
<svg class="r" style="left:1640px;top:604px;" width="14" height="10" viewBox="0 0 14 10"><path d="M2 2 L7 7 L12 2" fill="none" stroke="#cfcfcf" stroke-width="1.4"/></svg>
<div class="t " style="left:1658px;top:602.70px;font-size:15.95px;line-height:15.95px;color:#e6e6e6;transform:scaleX(0.9091);transform-origin:0 0;">Surface</div>
<svg class="r" style="left:1884px;top:606px;" width="16" height="8" viewBox="0 0 16 8"><g fill="#aaa"><rect x="1" y="1" width="2" height="2"/><rect x="5" y="1" width="2" height="2"/><rect x="9" y="1" width="2" height="2"/><rect x="13" y="1" width="2" height="2"/><rect x="1" y="5" width="2" height="2"/><rect x="5" y="5" width="2" height="2"/><rect x="9" y="5" width="2" height="2"/><rect x="13" y="5" width="2" height="2"/></g></svg>
<div class="r" style="left:1642px;top:637px;width:255px;height:23px;background:#4772b3;border-radius:4px"></div>
<svg class="r" style="left:1646px;top:639px;" width="22" height="19" viewBox="0 0 22 19"><rect x="2" y="2" width="12" height="7" rx="1.5" fill="#e6e6e6"/><rect x="2" y="11" width="10" height="6" rx="1.5" fill="#e6e6e6"/><path d="M16 5 Q19 5 19 9 Q19 13 15 14" fill="none" stroke="#e6e6e6" stroke-width="1.3"/></svg>
<div class="t " style="left:1743.8px;top:640.40px;font-size:15.95px;line-height:15.95px;color:#fff;transform:scaleX(0.9091);transform-origin:0 0;">Use Nodes</div>
<div class="t " style="left:1726px;top:685.50px;font-size:15.95px;line-height:15.95px;color:#e6e6e6;transform:translateX(-100%) scaleX(0.9091);transform-origin:100% 0;">Surface</div>
<div class="r" style="left:1741px;top:681px;width:130px;height:23px;background:#282828;border-radius:4px"></div>
<div class="r" style="left:1747.5px;top:688px;width:8px;height:8px;background:#63c763;border-radius:50%"></div>
<div class="t " style="left:1765.8px;top:685.50px;font-size:15.95px;line-height:15.95px;color:#e6e6e6;transform:scaleX(0.9091);transform-origin:0 0;">Multiply</div>
<div class="r" style="left:1642px;top:725px;width:229px;height:23px;background:#282828;border-radius:4px"></div>
<div class="t " style="left:1651px;top:729.70px;font-size:15.95px;line-height:15.95px;color:#e6e6e6;transform:scaleX(0.9091);transform-origin:0 0;">Color</div>
<svg class="r" style="left:1859px;top:734px;" width="10" height="6" viewBox="0 0 10 6"><path d="M1.5 1.5 L5 4.8 L8.5 1.5" fill="none" stroke="#cfcfcf" stroke-width="1.5" stroke-linecap="round" stroke-linejoin="round"/></svg>
<div class="r" style="left:1883.5px;top:734px;width:5px;height:5px;background:#d8d8d8;border-radius:50%"></div>
<div class="r" style="left:1642px;top:756px;width:229px;height:23px;background:#282828;border-radius:4px"></div>
<div class="t " style="left:1651px;top:760.70px;font-size:15.95px;line-height:15.95px;color:#e6e6e6;transform:scaleX(0.9091);transform-origin:0 0;">Multiply</div>
<svg class="r" style="left:1859px;top:765px;" width="10" height="6" viewBox="0 0 10 6"><path d="M1.5 1.5 L5 4.8 L8.5 1.5" fill="none" stroke="#cfcfcf" stroke-width="1.5" stroke-linecap="round" stroke-linejoin="round"/></svg>
<div class="r" style="left:1883.5px;top:765px;width:5px;height:5px;background:#d8d8d8;border-radius:50%"></div>
<div class="r" style="left:1740px;top:790px;width:17px;height:17px;background:#545454;border-radius:3px"></div>
<div class="t " style="left:1761px;top:791.20px;font-size:15.95px;line-height:15.95px;color:#e6e6e6;transform:scaleX(0.9091);transform-origin:0 0;">Clamp Result</div>
<div class="r" style="left:1883.5px;top:796px;width:5px;height:5px;background:#d8d8d8;border-radius:50%"></div>
<svg class="r" style="left:1740px;top:821.5px;" width="14" height="14" viewBox="0 0 14 14"><rect x="0" y="0" width="14" height="14" rx="2.5" fill="#4772b3"/><path d="M3 7.5 L6 10.5 L11.5 3.5" fill="none" stroke="#fff" stroke-width="2"/></svg>
<svg class="r" style="left:1740px;top:821.5px;" width="17" height="17" viewBox="0 0 17 17"><rect width="17" height="17" rx="3" fill="#4772b3"/><path d="M4 9 L7.5 12.5 L13.5 4.5" fill="none" stroke="#fff" stroke-width="2"/></svg>
<div class="t " style="left:1761px;top:822.20px;font-size:15.95px;line-height:15.95px;color:#e6e6e6;transform:scaleX(0.9091);transform-origin:0 0;">Clamp Factor</div>
<div class="r" style="left:1883.5px;top:827px;width:5px;height:5px;background:#d8d8d8;border-radius:50%"></div>
<div class="t " style="left:1727px;top:852.40px;font-size:15.95px;line-height:15.95px;color:#e6e6e6;transform:translateX(-100%) scaleX(0.9091);transform-origin:100% 0;">Factor</div>
<div class="r" style="left:1741px;top:849px;width:130px;height:23px;background:#545454;border-radius:4px"></div>
<div class="r" style="left:1741px;top:849px;width:23px;height:23px;background:#282828;border-radius:4px 0 0 4px"></div>
<div class="r" style="left:1764px;top:849px;width:53px;height:23px;background:#4772b3;"></div>
<div class="r" style="left:1748px;top:856px;width:8px;height:8px;background:#9a9a9a;border-radius:50%"></div>
<div class="t " style="left:1799px;top:852.70px;font-size:15.95px;line-height:15.95px;color:#e8e8e8;transform:scaleX(0.9091);transform-origin:0 0;">0.500</div>
<div class="r" style="left:1883.5px;top:858px;width:5px;height:5px;background:#d8d8d8;border-radius:50%"></div>
<svg class="r" style="left:1649px;top:887.5px;" width="9" height="10" viewBox="0 0 9 10"><path d="M1 1 V9 L8 5Z" fill="#cfcfcf"/></svg>
<div class="t " style="left:1719px;top:884.70px;font-size:15.95px;line-height:15.95px;color:#e6e6e6;transform:scaleX(0.9091);transform-origin:0 0;">A</div>
<div class="r" style="left:1741px;top:880.5px;width:130px;height:23px;background:#2e3850;border-radius:4px"></div>
<div class="r" style="left:1747.5px;top:888.0px;width:8px;height:8px;background:#c7c729;border-radius:50%"></div>
<div class="t " style="left:1765.8px;top:884.70px;font-size:15.95px;line-height:15.95px;color:#e6e6e6;transform:scaleX(0.9091);transform-origin:0 0;">std_FlagPole_...</div>
<svg class="r" style="left:1649px;top:918px;" width="9" height="10" viewBox="0 0 9 10"><path d="M1 1 V9 L8 5Z" fill="#cfcfcf"/></svg>
<div class="t " style="left:1719px;top:915.20px;font-size:15.95px;line-height:15.95px;color:#e6e6e6;transform:scaleX(0.9091);transform-origin:0 0;">B</div>
<div class="r" style="left:1741px;top:911px;width:130px;height:23px;background:#282828;border-radius:4px"></div>
<div class="r" style="left:1747.5px;top:918.5px;width:8px;height:8px;background:#c7c729;border-radius:50%"></div>
<div class="t " style="left:1765.8px;top:915.20px;font-size:15.95px;line-height:15.95px;color:#e6e6e6;transform:scaleX(0.9091);transform-origin:0 0;">Color Ramp</div>
<div class="r" style="left:1631px;top:948px;width:276px;height:30px;background:#3a3a3a;border-radius:5px"></div>
<svg class="r" style="left:1643px;top:955px;" width="8" height="14" viewBox="0 0 8 14"><path d="M2 2 L6 7 L2 12" fill="none" stroke="#cfcfcf" stroke-width="1.4"/></svg>
<div class="t " style="left:1658.3px;top:955.70px;font-size:15.95px;line-height:15.95px;color:#e6e6e6;transform:scaleX(0.9091);transform-origin:0 0;">Volume</div>
<svg class="r" style="left:1884px;top:958px;" width="16" height="8" viewBox="0 0 16 8"><g fill="#aaa"><rect x="1" y="1" width="2" height="2"/><rect x="5" y="1" width="2" height="2"/><rect x="9" y="1" width="2" height="2"/><rect x="13" y="1" width="2" height="2"/><rect x="1" y="5" width="2" height="2"/><rect x="5" y="5" width="2" height="2"/><rect x="9" y="5" width="2" height="2"/><rect x="13" y="5" width="2" height="2"/></g></svg>
<div class="r" style="left:0px;top:642px;width:1583px;height:329px;background:#1d1d1d;border-radius:6px"></div>
<div class="r" style="left:0px;top:674px;width:1310px;height:297px;background:transparent;background-image:radial-gradient(circle, rgba(70,70,70,0.6) 0.8px, transparent 1px);background-size:58.5px 58.5px;background-position:-21px -8px"></div>
<svg class="r" style="left:0;top:0" width="1583" height="971" viewBox="0 0 1583 971"><defs></defs><linearGradient id="l1" gradientUnits="userSpaceOnUse" x1="811.7" y1="671.5" x2="931" y2="845.8"><stop offset="0" stop-color="#c7c729"/><stop offset="1" stop-color="#c7c729"/></linearGradient><path d="M811.7 671.5 C871.35 671.5 871.35 845.8 931 845.8" fill="none" stroke="#111" stroke-width="3.4" opacity="0.6"/><path d="M811.7 671.5 C871.35 671.5 871.35 845.8 931 845.8" fill="none" stroke="url(#l1)" stroke-width="2.0"/><linearGradient id="l2" gradientUnits="userSpaceOnUse" x1="617" y1="834.3" x2="654.3" y2="902.3"><stop offset="0" stop-color="#63c763"/><stop offset="1" stop-color="#e8f0e0"/></linearGradient><path d="M617 834.3 C642 834.3 629.3 902.3 654.3 902.3" fill="none" stroke="#111" stroke-width="3.2" opacity="0.6"/><path d="M617 834.3 C642 834.3 629.3 902.3 654.3 902.3" fill="none" stroke="url(#l2)" stroke-width="1.8"/><linearGradient id="l3" gradientUnits="userSpaceOnUse" x1="736.6" y1="874.6" x2="765" y2="961.5"><stop offset="0" stop-color="#c7c729"/><stop offset="1" stop-color="#e8e8e0"/></linearGradient><path d="M736.6 874.6 C761.6 874.6 740 961.5 765 961.5" fill="none" stroke="#111" stroke-width="3.2" opacity="0.6"/><path d="M736.6 874.6 C761.6 874.6 740 961.5 765 961.5" fill="none" stroke="url(#l3)" stroke-width="1.8"/><linearGradient id="l4" gradientUnits="userSpaceOnUse" x1="905" y1="869.7" x2="931" y2="858.6"><stop offset="0" stop-color="#c7c729"/><stop offset="1" stop-color="#c7c729"/></linearGradient><path d="M905 869.7 C930 869.7 906 858.6 931 858.6" fill="none" stroke="#111" stroke-width="3.2" opacity="0.6"/><path d="M905 869.7 C930 869.7 906 858.6 931 858.6" fill="none" stroke="url(#l4)" stroke-width="1.8"/><linearGradient id="l5" gradientUnits="userSpaceOnUse" x1="1013" y1="757.8" x2="1067.5" y2="818.7"><stop offset="0" stop-color="#c7c729"/><stop offset="1" stop-color="#63c763"/></linearGradient><path d="M1013 757.8 C1040.25 757.8 1040.25 818.7 1067.5 818.7" fill="none" stroke="#111" stroke-width="3.2" opacity="0.6"/><path d="M1013 757.8 C1040.25 757.8 1040.25 818.7 1067.5 818.7" fill="none" stroke="url(#l5)" stroke-width="1.8"/></svg>
<div class="r" style="left:670.5px;top:671px;width:141px;height:139px;background:#303030;border-radius:0 0 4px 4px;box-shadow:0 0 0 1px #161616, 2px 3px 4px rgba(0,0,0,.5)"></div>
<div class="t " style="left:804px;top:667.88px;font-size:7.59px;line-height:7.59px;color:#d4d4d4;transform:translateX(-100%) scaleX(0.9091);transform-origin:100% 0;">Color</div>
<div class="r" style="left:809.1px;top:668.9px;width:5.2px;height:5.2px;background:#c7c729;border-radius:50%;box-shadow:0 0 0 0.8px #111"></div>
<div class="t " style="left:804px;top:680.38px;font-size:7.59px;line-height:7.59px;color:#d4d4d4;transform:translateX(-100%) scaleX(0.9091);transform-origin:100% 0;">Alpha</div>
<div class="r" style="left:809.1px;top:682.0px;width:5.2px;height:5.2px;background:#a1a1a1;border-radius:50%;box-shadow:0 0 0 0.8px #111"></div>
<div class="r" style="left:677px;top:696px;width:17px;height:10px;background:#282828;border-radius:2px 0 0 2px"></div>
<svg class="r" style="left:678px;top:696.5px;" width="15" height="9" viewBox="0 0 15 9"><path d="M1 1 H7 V8 H1Z" fill="none" stroke="#ddd" stroke-width="0.9"/><path d="M1.5 8 L4 4 L6.5 8Z" fill="#ddd"/><path d="M9 3 L10.5 4.6 L12 3" fill="none" stroke="#ccc" stroke-width="0.9"/></svg>
<div class="r" style="left:694px;top:696px;width:64px;height:10px;background:#1d1d1d;"></div>
<div class="t " style="left:698.4px;top:698.08px;font-size:7.59px;line-height:7.59px;color:#d4d4d4;transform:scaleX(0.9091);transform-origin:0 0;">std_FlagPole_ma...</div>
<div class="r" style="left:758px;top:696px;width:48px;height:10px;background:#3a3a3a;border-radius:0 2px 2px 0"></div>
<svg class="r" style="left:758px;top:696px;" width="48" height="10" viewBox="0 0 48 10"><path d="M6.5 1.5 L9.5 2.5 V5 C9.5 7 8 8 6.5 8.5 C5 8 3.5 7 3.5 5 V2.5Z" fill="none" stroke="#888" stroke-width="0.8"/><path d="M16 3 V1.5 H19.5 L21 3 V7 H19 M14.5 3 H18.5 V8.5 H14.5Z" fill="none" stroke="#ccc" stroke-width="0.8"/><path d="M26 2 H29 L30 3 H34 V8.5 H26Z" fill="#ddd"/><path d="M39 2.5 L44 7.5 M44 2.5 L39 7.5" stroke="#aaa" stroke-width="0.9"/></svg>
<div class="r" style="left:676.5px;top:710.4px;width:130px;height:10.2px;background:#282828;border-radius:2.5px;box-shadow:0 0 0 0.6px #1a1a1a"></div>
<div class="t " style="left:680.5px;top:711.88px;font-size:7.59px;line-height:7.59px;color:#d4d4d4;transform:scaleX(0.9091);transform-origin:0 0;">Closest</div>
<svg class="r" style="left:797.5px;top:713.5px;" width="7" height="4" viewBox="0 0 7 4"><path d="M1 1 L3.5 3.3 L6 1" fill="none" stroke="#ccc" stroke-width="1"/></svg>
<div class="r" style="left:676.5px;top:724.5px;width:130px;height:10.2px;background:#282828;border-radius:2.5px;box-shadow:0 0 0 0.6px #1a1a1a"></div>
<div class="t " style="left:680.5px;top:725.98px;font-size:7.59px;line-height:7.59px;color:#d4d4d4;transform:scaleX(0.9091);transform-origin:0 0;">Flat</div>
<svg class="r" style="left:797.5px;top:727.6px;" width="7" height="4" viewBox="0 0 7 4"><path d="M1 1 L3.5 3.3 L6 1" fill="none" stroke="#ccc" stroke-width="1"/></svg>
<div class="r" style="left:676.5px;top:739.4px;width:130px;height:10.2px;background:#282828;border-radius:2.5px;box-shadow:0 0 0 0.6px #1a1a1a"></div>
<div class="t " style="left:680.5px;top:740.88px;font-size:7.59px;line-height:7.59px;color:#d4d4d4;transform:scaleX(0.9091);transform-origin:0 0;">Repeat</div>
<svg class="r" style="left:797.5px;top:742.5px;" width="7" height="4" viewBox="0 0 7 4"><path d="M1 1 L3.5 3.3 L6 1" fill="none" stroke="#ccc" stroke-width="1"/></svg>
<div class="r" style="left:676.5px;top:753.5px;width:130px;height:10.2px;background:#282828;border-radius:2.5px;box-shadow:0 0 0 0.6px #1a1a1a"></div>
<div class="t " style="left:680.5px;top:754.98px;font-size:7.59px;line-height:7.59px;color:#d4d4d4;transform:scaleX(0.9091);transform-origin:0 0;">Single Image</div>
<svg class="r" style="left:797.5px;top:756.6px;" width="7" height="4" viewBox="0 0 7 4"><path d="M1 1 L3.5 3.3 L6 1" fill="none" stroke="#ccc" stroke-width="1"/></svg>
<div class="t " style="left:676.5px;top:770.48px;font-size:7.59px;line-height:7.59px;color:#d4d4d4;transform:scaleX(0.9091);transform-origin:0 0;">Color Space</div>
<div class="r" style="left:722.7px;top:768.7px;width:83.8px;height:10.6px;background:#282828;border-radius:2.5px;box-shadow:0 0 0 0.6px #1a1a1a"></div>
<div class="t " style="left:726.7px;top:770.58px;font-size:7.59px;line-height:7.59px;color:#d4d4d4;transform:scaleX(0.9091);transform-origin:0 0;">sRGB</div>
<svg class="r" style="left:797.5px;top:772.0px;" width="7" height="4" viewBox="0 0 7 4"><path d="M1 1 L3.5 3.3 L6 1" fill="none" stroke="#ccc" stroke-width="1"/></svg>
<div class="t " style="left:676.5px;top:785.38px;font-size:7.59px;line-height:7.59px;color:#d4d4d4;transform:scaleX(0.9091);transform-origin:0 0;">Alpha</div>
<div class="r" style="left:722.7px;top:783.6px;width:83.8px;height:10.6px;background:#282828;border-radius:2.5px;box-shadow:0 0 0 0.6px #1a1a1a"></div>
<div class="t " style="left:726.7px;top:785.48px;font-size:7.59px;line-height:7.59px;color:#d4d4d4;transform:scaleX(0.9091);transform-origin:0 0;">Straight</div>
<svg class="r" style="left:797.5px;top:786.9px;" width="7" height="4" viewBox="0 0 7 4"><path d="M1 1 L3.5 3.3 L6 1" fill="none" stroke="#ccc" stroke-width="1"/></svg>
<div class="r" style="left:667.9px;top:799.1px;width:5.2px;height:5.2px;background:#6363c7;border-radius:50%;box-shadow:0 0 0 0.8px #111"></div>
<div class="t " style="left:676.5px;top:797.88px;font-size:7.59px;line-height:7.59px;color:#d4d4d4;transform:scaleX(0.9091);transform-origin:0 0;">Vector</div>
<div class="r" style="left:476px;top:815px;width:140px;height:165px;background:#303030;border-radius:4px;box-shadow:0 0 0 1px #161616, 2px 3px 4px rgba(0,0,0,.5)"></div>
<div class="r" style="left:476px;top:815px;width:140px;height:11.5px;background:#2b652b;border-radius:4px 4px 0 0"></div>
<svg class="r" style="left:481px;top:818px;" width="6" height="5" viewBox="0 0 6 5"><path d="M0.5 1 L3 3.8 L5.5 1" fill="none" stroke="#ddd" stroke-width="0.9"/></svg>
<div class="t " style="left:490.8px;top:816.88px;font-size:7.59px;line-height:7.59px;color:#d4d4d4;transform:scaleX(0.9091);transform-origin:0 0;">Principled BSDF</div>
<div class="t " style="left:608.6px;top:831.18px;font-size:7.59px;line-height:7.59px;color:#d4d4d4;transform:translateX(-100%) scaleX(0.9091);transform-origin:100% 0;">BSDF</div>
<div class="r" style="left:613.9px;top:831.6999999999999px;width:5.2px;height:5.2px;background:#63c763;border-radius:50%;box-shadow:0 0 0 0.8px #111"></div>
<div class="r" style="left:473.2px;top:844.9px;width:5.2px;height:5.2px;background:#c7c729;border-radius:50%;box-shadow:0 0 0 0.8px #111"></div>
<div class="t " style="left:481.6px;top:844.48px;font-size:7.59px;line-height:7.59px;color:#d4d4d4;transform:scaleX(0.9091);transform-origin:0 0;">Base Color</div>
<div class="r" style="left:536.8px;top:843px;width:73.2px;height:9.8px;background:#e6e6e6;border-radius:2px"></div>
<div class="r" style="left:473.2px;top:858.4px;width:5.2px;height:5.2px;background:#a1a1a1;border-radius:50%;box-shadow:0 0 0 0.8px #111"></div>
<div class="r" style="left:481.6px;top:856px;width:128.4px;height:10px;background:#545454;border-radius:2.5px"></div>
<div class="t " style="left:490.6px;top:857.48px;font-size:7.59px;line-height:7.59px;color:#d4d4d4;transform:scaleX(0.9091);transform-origin:0 0;">Metallic</div>
<div class="t " style="left:602.0px;top:857.48px;font-size:7.59px;line-height:7.59px;color:#d4d4d4;transform:translateX(-100%) scaleX(0.9091);transform-origin:100% 0;">0.000</div>
<div class="r" style="left:473.2px;top:871.4px;width:5.2px;height:5.2px;background:#a1a1a1;border-radius:50%;box-shadow:0 0 0 0.8px #111"></div>
<div class="r" style="left:481.6px;top:869px;width:128.4px;height:10px;background:#545454;border-radius:2.5px"></div>
<div class="r" style="left:481.6px;top:869px;width:64.2px;height:10px;background:#4772b3;border-radius:2.5px 0 0 2.5px"></div>
<div class="t " style="left:490.6px;top:870.48px;font-size:7.59px;line-height:7.59px;color:#d4d4d4;transform:scaleX(0.9091);transform-origin:0 0;">Roughness</div>
<div class="t " style="left:602.0px;top:870.48px;font-size:7.59px;line-height:7.59px;color:#d4d4d4;transform:translateX(-100%) scaleX(0.9091);transform-origin:100% 0;">0.500</div>
<div class="r" style="left:473.2px;top:885.0px;width:5.2px;height:5.2px;background:#a1a1a1;border-radius:50%;box-shadow:0 0 0 0.8px #111"></div>
<div class="r" style="left:481.6px;top:882.6px;width:128.4px;height:10px;background:#545454;border-radius:2.5px"></div>
<div class="t " style="left:490.6px;top:884.08px;font-size:7.59px;line-height:7.59px;color:#d4d4d4;transform:scaleX(0.9091);transform-origin:0 0;">IOR</div>
<div class="t " style="left:602.0px;top:884.08px;font-size:7.59px;line-height:7.59px;color:#d4d4d4;transform:translateX(-100%) scaleX(0.9091);transform-origin:100% 0;">1.450</div>
<div class="r" style="left:473.2px;top:898.1999999999999px;width:5.2px;height:5.2px;background:#a1a1a1;border-radius:50%;box-shadow:0 0 0 0.8px #111"></div>
<div class="r" style="left:481.6px;top:895.8px;width:128.4px;height:10px;background:#545454;border-radius:2.5px"></div>
<div class="r" style="left:481.6px;top:895.8px;width:128.4px;height:10px;background:#4772b3;border-radius:2.5px"></div>
<div class="t " style="left:490.6px;top:897.28px;font-size:7.59px;line-height:7.59px;color:#d4d4d4;transform:scaleX(0.9091);transform-origin:0 0;">Alpha</div>
<div class="t " style="left:602.0px;top:897.28px;font-size:7.59px;line-height:7.59px;color:#d4d4d4;transform:translateX(-100%) scaleX(0.9091);transform-origin:100% 0;">1.000</div>
<div class="r" style="left:473.2px;top:910.8px;width:5.2px;height:5.2px;background:#6363c7;border-radius:50%;box-shadow:0 0 0 0.8px #111"></div>
<div class="t " style="left:481.6px;top:910.28px;font-size:7.59px;line-height:7.59px;color:#d4d4d4;transform:scaleX(0.9091);transform-origin:0 0;">Normal</div>
<svg class="r" style="left:484px;top:921.6px;" width="5" height="7" viewBox="0 0 5 7"><path d="M1 1 L4 3.5 L1 6" fill="none" stroke="#ccc" stroke-width="0.9"/></svg>
<div class="t " style="left:490.8px;top:922.48px;font-size:7.59px;line-height:7.59px;color:#d4d4d4;transform:scaleX(0.9091);transform-origin:0 0;">Subsurface</div>
<svg class="r" style="left:484px;top:933px;" width="5" height="7" viewBox="0 0 5 7"><path d="M1 1 L4 3.5 L1 6" fill="none" stroke="#ccc" stroke-width="0.9"/></svg>
<div class="t " style="left:490.8px;top:933.88px;font-size:7.59px;line-height:7.59px;color:#d4d4d4;transform:scaleX(0.9091);transform-origin:0 0;">Specular</div>
<svg class="r" style="left:484px;top:944.8px;" width="5" height="7" viewBox="0 0 5 7"><path d="M1 1 L4 3.5 L1 6" fill="none" stroke="#ccc" stroke-width="0.9"/></svg>
<div class="t " style="left:490.8px;top:945.68px;font-size:7.59px;line-height:7.59px;color:#d4d4d4;transform:scaleX(0.9091);transform-origin:0 0;">Transmission</div>
<svg class="r" style="left:484px;top:956.6px;" width="5" height="7" viewBox="0 0 5 7"><path d="M1 1 L4 3.5 L1 6" fill="none" stroke="#ccc" stroke-width="0.9"/></svg>
<div class="t " style="left:490.8px;top:957.48px;font-size:7.59px;line-height:7.59px;color:#d4d4d4;transform:scaleX(0.9091);transform-origin:0 0;">Coat</div>
<div class="r" style="left:654.3px;top:854.5px;width:82.3px;height:56.6px;background:#303030;border-radius:4px;box-shadow:0 0 0 1.3px #f0f0f0, 2px 3px 4px rgba(0,0,0,.5)"></div>
<div class="r" style="left:654.3px;top:854.5px;width:82.3px;height:11.5px;background:#246283;border-radius:4px 4px 0 0"></div>
<svg class="r" style="left:659px;top:858px;" width="6" height="5" viewBox="0 0 6 5"><path d="M0.5 1 L3 3.8 L5.5 1" fill="none" stroke="#ddd" stroke-width="0.9"/></svg>
<div class="t " style="left:669.2px;top:856.38px;font-size:7.59px;line-height:7.59px;color:#d4d4d4;transform:scaleX(0.9091);transform-origin:0 0;">Shader to RGB</div>
<div class="t " style="left:728.2px;top:870.68px;font-size:7.59px;line-height:7.59px;color:#d4d4d4;transform:translateX(-100%) scaleX(0.9091);transform-origin:100% 0;">Color</div>
<div class="r" style="left:734.0px;top:872.0px;width:5.2px;height:5.2px;background:#c7c729;border-radius:50%;box-shadow:0 0 0 0.8px #111"></div>
<div class="t " style="left:728.2px;top:883.58px;font-size:7.59px;line-height:7.59px;color:#d4d4d4;transform:translateX(-100%) scaleX(0.9091);transform-origin:100% 0;">Alpha</div>
<div class="r" style="left:734.0px;top:885.0px;width:5.2px;height:5.2px;background:#a1a1a1;border-radius:50%;box-shadow:0 0 0 0.8px #111"></div>
<div class="r" style="left:651.6999999999999px;top:899.6999999999999px;width:5.2px;height:5.2px;background:#63c763;border-radius:50%;box-shadow:0 0 0 0.8px #111"></div>
<div class="t " style="left:661px;top:898.88px;font-size:7.59px;line-height:7.59px;color:#d4d4d4;transform:scaleX(0.9091);transform-origin:0 0;">Shader</div>
<div class="r" style="left:765.3px;top:850.2px;width:140px;height:119px;background:#303030;border-radius:4px;box-shadow:0 0 0 1px #161616, 2px 3px 4px rgba(0,0,0,.5)"></div>
<div class="r" style="left:765.3px;top:850.2px;width:140px;height:11px;background:#246283;border-radius:4px 4px 0 0"></div>
<svg class="r" style="left:770px;top:853.5px;" width="6" height="5" viewBox="0 0 6 5"><path d="M0.5 1 L3 3.8 L5.5 1" fill="none" stroke="#ddd" stroke-width="0.9"/></svg>
<div class="t " style="left:779.6px;top:851.68px;font-size:7.59px;line-height:7.59px;color:#d4d4d4;transform:scaleX(0.9091);transform-origin:0 0;">Color Ramp</div>
<div class="t " style="left:898.5px;top:866.28px;font-size:7.59px;line-height:7.59px;color:#d4d4d4;transform:translateX(-100%) scaleX(0.9091);transform-origin:100% 0;">Color</div>
<div class="r" style="left:902.4px;top:867.1px;width:5.2px;height:5.2px;background:#c7c729;border-radius:50%;box-shadow:0 0 0 0.8px #111"></div>
<div class="t " style="left:898.5px;top:879.08px;font-size:7.59px;line-height:7.59px;color:#d4d4d4;transform:translateX(-100%) scaleX(0.9091);transform-origin:100% 0;">Alpha</div>
<div class="r" style="left:902.4px;top:880.4px;width:5.2px;height:5.2px;background:#a1a1a1;border-radius:50%;box-shadow:0 0 0 0.8px #111"></div>
<svg class="r" style="left:771px;top:897px;" width="45" height="10" viewBox="0 0 45 10"><path d="M3 5 H9 M6 2 V8 M16 5 H22" stroke="#777" stroke-width="0.9"/><path d="M34 3.5 L36.5 6 L39 3.5" fill="none" stroke="#ccc" stroke-width="0.9"/></svg>
<div class="r" style="left:825px;top:897.5px;width:36px;height:9px;background:#282828;border-radius:2.5px;box-shadow:0 0 0 0.6px #1a1a1a"></div>
<div class="t " style="left:829px;top:897.78px;font-size:7.59px;line-height:7.59px;color:#d4d4d4;transform:scaleX(0.9091);transform-origin:0 0;">RGB</div>
<svg class="r" style="left:852px;top:900.0px;" width="7" height="4" viewBox="0 0 7 4"><path d="M1 1 L3.5 3.3 L6 1" fill="none" stroke="#ccc" stroke-width="1"/></svg>
<div class="r" style="left:861px;top:897.5px;width:38px;height:9px;background:#282828;border-radius:2.5px;box-shadow:0 0 0 0.6px #1a1a1a"></div>
<div class="t " style="left:865px;top:897.78px;font-size:7.59px;line-height:7.59px;color:#d4d4d4;transform:scaleX(0.9091);transform-origin:0 0;">Const...</div>
<svg class="r" style="left:890px;top:900.0px;" width="7" height="4" viewBox="0 0 7 4"><path d="M1 1 L3.5 3.3 L6 1" fill="none" stroke="#ccc" stroke-width="1"/></svg>
<div class="r" style="left:771px;top:911.8px;width:126.3px;height:10.2px;background:#ffffff;"></div>
<div class="r" style="left:772px;top:910.5px;width:3px;height:4px;background:#d02020;"></div>
<div class="r" style="left:771.5px;top:917px;width:6px;height:5px;background:#fff;box-shadow:0 0 0 0.8px #222"></div>
<div class="r" style="left:771px;top:929px;width:35.2px;height:9.9px;background:#545454;border-radius:2px"></div>
<div class="t " style="left:786px;top:930.48px;font-size:7.59px;line-height:7.59px;color:#d4d4d4;transform:scaleX(0.9091);transform-origin:0 0;">1</div>
<div class="r" style="left:812.8px;top:929px;width:86.2px;height:9.9px;background:#545454;border-radius:2px"></div>
<div class="t " style="left:821.4px;top:930.48px;font-size:7.59px;line-height:7.59px;color:#d4d4d4;transform:scaleX(0.9091);transform-origin:0 0;">Pos</div>
<div class="t " style="left:890px;top:930.48px;font-size:7.59px;line-height:7.59px;color:#d4d4d4;transform:translateX(-100%) scaleX(0.9091);transform-origin:100% 0;">0.011</div>
<div class="r" style="left:771px;top:944.3px;width:128px;height:9.8px;background:#ffffff;border-radius:2px"></div>
<div class="r" style="left:762.4px;top:958.9px;width:5.2px;height:5.2px;background:#a1a1a1;border-radius:50%;box-shadow:0 0 0 0.8px #111"></div>
<div class="t " style="left:771px;top:958.18px;font-size:7.59px;line-height:7.59px;color:#d4d4d4;transform:scaleX(0.9091);transform-origin:0 0;">Fac</div>
<div class="r" style="left:932.3px;top:738.6px;width:80.7px;height:129.8px;background:#303030;border-radius:4px;box-shadow:0 0 0 1px #161616, 2px 3px 4px rgba(0,0,0,.5)"></div>
<div class="r" style="left:932.3px;top:738.6px;width:80.7px;height:10.6px;background:#76751f;border-radius:4px 4px 0 0"></div>
<svg class="r" style="left:937px;top:742px;" width="6" height="5" viewBox="0 0 6 5"><path d="M0.5 1 L3 3.8 L5.5 1" fill="none" stroke="#ddd" stroke-width="0.9"/></svg>
<div class="t " style="left:945.8px;top:740.38px;font-size:7.59px;line-height:7.59px;color:#d4d4d4;transform:scaleX(0.9091);transform-origin:0 0;">Multiply</div>
<div class="t " style="left:1006.9px;top:754.18px;font-size:7.59px;line-height:7.59px;color:#d4d4d4;transform:translateX(-100%) scaleX(0.9091);transform-origin:100% 0;">Result</div>
<div class="r" style="left:1010.4px;top:755.1999999999999px;width:5.2px;height:5.2px;background:#c7c729;border-radius:50%;box-shadow:0 0 0 0.8px #111"></div>
<div class="r" style="left:937.7px;top:770.6px;width:70.2px;height:10.6px;background:#282828;border-radius:2.5px;box-shadow:0 0 0 0.6px #1a1a1a"></div>
<div class="t " style="left:941.7px;top:772.48px;font-size:7.59px;line-height:7.59px;color:#d4d4d4;transform:scaleX(0.9091);transform-origin:0 0;">Color</div>
<svg class="r" style="left:998.9000000000001px;top:773.9px;" width="7" height="4" viewBox="0 0 7 4"><path d="M1 1 L3.5 3.3 L6 1" fill="none" stroke="#ccc" stroke-width="1"/></svg>
<div class="r" style="left:937.7px;top:784.7px;width:70.2px;height:10.6px;background:#282828;border-radius:2.5px;box-shadow:0 0 0 0.6px #1a1a1a"></div>
<div class="t " style="left:941.7px;top:786.58px;font-size:7.59px;line-height:7.59px;color:#d4d4d4;transform:scaleX(0.9091);transform-origin:0 0;">Multiply</div>
<svg class="r" style="left:998.9000000000001px;top:788.0px;" width="7" height="4" viewBox="0 0 7 4"><path d="M1 1 L3.5 3.3 L6 1" fill="none" stroke="#ccc" stroke-width="1"/></svg>
<div class="r" style="left:937.7px;top:800.7px;width:8.1px;height:8.1px;background:#545454;border-radius:1.5px"></div>
<div class="t " style="left:947.8px;top:800.88px;font-size:7.59px;line-height:7.59px;color:#d4d4d4;transform:scaleX(0.9091);transform-origin:0 0;">Clamp Result</div>
<svg class="r" style="left:937.7px;top:815.7px;" width="8.1" height="8.1" viewBox="0 0 8.1 8.1"><rect width="8.1" height="8.1" rx="1.5" fill="#4772b3"/><path d="M1.8 4.3 L3.5 6 L6.5 2" fill="none" stroke="#fff" stroke-width="1.1"/></svg>
<div class="t " style="left:947.8px;top:815.88px;font-size:7.59px;line-height:7.59px;color:#d4d4d4;transform:scaleX(0.9091);transform-origin:0 0;">Clamp Factor</div>
<div class="r" style="left:928.4px;top:829.6px;width:5.2px;height:5.2px;background:#a1a1a1;border-radius:50%;box-shadow:0 0 0 0.8px #111"></div>
<div class="r" style="left:937.7px;top:827.8px;width:70.2px;height:10.6px;background:#545454;border-radius:2.5px"></div>
<div class="r" style="left:937.7px;top:827.8px;width:33.5px;height:10.6px;background:#4772b3;border-radius:2.5px 0 0 2.5px"></div>
<div class="t " style="left:947px;top:829.88px;font-size:7.59px;line-height:7.59px;color:#d4d4d4;transform:scaleX(0.9091);transform-origin:0 0;">Factor</div>
<div class="t " style="left:979.6px;top:829.88px;font-size:7.59px;line-height:7.59px;color:#d4d4d4;transform:scaleX(0.9091);transform-origin:0 0;">0.500</div>
<div class="r" style="left:928.4px;top:843.1999999999999px;width:5.2px;height:5.2px;background:#c7c729;border-radius:50%;box-shadow:0 0 0 0.8px #111"></div>
<div class="t " style="left:938.4px;top:842.68px;font-size:7.59px;line-height:7.59px;color:#d4d4d4;transform:scaleX(0.9091);transform-origin:0 0;">A</div>
<div class="r" style="left:928.4px;top:856.0px;width:5.2px;height:5.2px;background:#c7c729;border-radius:50%;box-shadow:0 0 0 0.8px #111"></div>
<div class="t " style="left:938.4px;top:855.48px;font-size:7.59px;line-height:7.59px;color:#d4d4d4;transform:scaleX(0.9091);transform-origin:0 0;">B</div>
<div class="r" style="left:1067.2px;top:787.4px;width:81.3px;height:67px;background:#303030;border-radius:4px;box-shadow:0 0 0 1px #161616, 2px 3px 4px rgba(0,0,0,.5)"></div>
<div class="r" style="left:1067.2px;top:787.4px;width:81.3px;height:10.8px;background:#5e2232;border-radius:4px 4px 0 0"></div>
<svg class="r" style="left:1072px;top:791px;" width="6" height="5" viewBox="0 0 6 5"><path d="M0.5 1 L3 3.8 L5.5 1" fill="none" stroke="#ddd" stroke-width="0.9"/></svg>
<div class="t " style="left:1081.3px;top:789.38px;font-size:7.59px;line-height:7.59px;color:#d4d4d4;transform:scaleX(0.9091);transform-origin:0 0;">Material Output</div>
<div class="r" style="left:1072.7px;top:801.4px;width:70.2px;height:9.9px;background:#282828;border-radius:2.5px;box-shadow:0 0 0 0.6px #1a1a1a"></div>
<div class="t " style="left:1076.7px;top:802.58px;font-size:7.59px;line-height:7.59px;color:#d4d4d4;transform:scaleX(0.9091);transform-origin:0 0;">All</div>
<svg class="r" style="left:1133.9px;top:804.35px;" width="7" height="4" viewBox="0 0 7 4"><path d="M1 1 L3.5 3.3 L6 1" fill="none" stroke="#ccc" stroke-width="1"/></svg>
<div class="r" style="left:1064.9px;top:816.1px;width:5.2px;height:5.2px;background:#63c763;border-radius:50%;box-shadow:0 0 0 0.8px #111"></div>
<div class="t " style="left:1073.9px;top:815.38px;font-size:7.59px;line-height:7.59px;color:#d4d4d4;transform:scaleX(0.9091);transform-origin:0 0;">Surface</div>
<div class="r" style="left:1064.9px;top:828.9px;width:5.2px;height:5.2px;background:#63c763;border-radius:50%;box-shadow:0 0 0 0.8px #111"></div>
<div class="t " style="left:1073.9px;top:828.18px;font-size:7.59px;line-height:7.59px;color:#d4d4d4;transform:scaleX(0.9091);transform-origin:0 0;">Volume</div>
<div class="r" style="left:1064.9px;top:842.6999999999999px;width:5.2px;height:5.2px;background:#6363c7;border-radius:50%;box-shadow:0 0 0 0.8px #111"></div>
<div class="t " style="left:1073.9px;top:841.98px;font-size:7.59px;line-height:7.59px;color:#d4d4d4;transform:scaleX(0.9091);transform-origin:0 0;">Displacement</div>
<div class="r" style="left:8px;top:964.5px;width:1290px;height:3px;background:#3a3a3a;border-radius:2px"></div>
<div class="r" style="left:1302px;top:702px;width:3.5px;height:233px;background:#333;border-radius:2px"></div>
<div class="r" style="left:0px;top:642px;width:1583px;height:29px;background:#1f1f1f;border-radius:6px 6px 0 0"></div>
<div class="r" style="left:8px;top:647px;width:39px;height:23px;background:#282828;border-radius:4px;"></div>
<svg class="r" style="left:12px;top:649px;" width="24" height="19" viewBox="0 0 24 19"><circle cx="10" cy="10" r="7.5" fill="none" stroke="#e6e6e6" stroke-width="1.6"/><path d="M6 8 A4.5 4.5 0 0 1 10 4.5" fill="none" stroke="#e6e6e6" stroke-width="1.5"/></svg>
<svg class="r" style="left:34px;top:656px;" width="10" height="6" viewBox="0 0 10 6"><path d="M1.5 1.5 L5 4.8 L8.5 1.5" fill="none" stroke="#cfcfcf" stroke-width="1.5" stroke-linecap="round" stroke-linejoin="round"/></svg>
<div class="r" style="left:55px;top:647px;width:114px;height:23px;background:#282828;border-radius:4px;"></div>
<svg class="r" style="left:59px;top:649px;" width="22" height="19" viewBox="0 0 22 19"><path d="M2 6 V2 H6 M12 2 H16 V6 M16 12 V16 H12 M6 16 H2 V12" fill="none" stroke="#cfcfcf" stroke-width="1.3"/><rect x="5" y="5" width="8" height="8" fill="#e6e6e6"/></svg>
<div class="t " style="left:87.1px;top:651.20px;font-size:15.95px;line-height:15.95px;color:#e6e6e6;transform:scaleX(0.9091);transform-origin:0 0;">Object</div>
<svg class="r" style="left:155px;top:656px;" width="10" height="6" viewBox="0 0 10 6"><path d="M1.5 1.5 L5 4.8 L8.5 1.5" fill="none" stroke="#cfcfcf" stroke-width="1.5" stroke-linecap="round" stroke-linejoin="round"/></svg>
<div class="t " style="left:184.3px;top:651.20px;font-size:15.95px;line-height:15.95px;color:#e6e6e6;transform:scaleX(0.9091);transform-origin:0 0;">View</div>
<div class="t " style="left:235px;top:651.20px;font-size:15.95px;line-height:15.95px;color:#e6e6e6;transform:scaleX(0.9091);transform-origin:0 0;">Select</div>
<div class="t " style="left:296.2px;top:651.20px;font-size:15.95px;line-height:15.95px;color:#e6e6e6;transform:scaleX(0.9091);transform-origin:0 0;">Add</div>
<div class="t " style="left:341.7px;top:651.20px;font-size:15.95px;line-height:15.95px;color:#e6e6e6;transform:scaleX(0.9091);transform-origin:0 0;">Node</div>
<svg class="r" style="left:395px;top:649.7px;" width="17" height="17" viewBox="0 0 17 17"><rect width="17" height="17" rx="3" fill="#4772b3"/><path d="M4 9 L7.5 12.5 L13.5 4.5" fill="none" stroke="#fff" stroke-width="2"/></svg>
<div class="t " style="left:416.3px;top:651.20px;font-size:15.95px;line-height:15.95px;color:#e6e6e6;transform:scaleX(0.9091);transform-origin:0 0;">Use Nodes</div>
<div class="r" style="left:563px;top:647px;width:98px;height:23px;background:#282828;border-radius:4px;"></div>
<div class="t " style="left:572.1px;top:651.20px;font-size:15.95px;line-height:15.95px;color:#e6e6e6;transform:scaleX(0.9091);transform-origin:0 0;">Slot 1</div>
<svg class="r" style="left:648px;top:656px;" width="10" height="6" viewBox="0 0 10 6"><path d="M1.5 1.5 L5 4.8 L8.5 1.5" fill="none" stroke="#cfcfcf" stroke-width="1.5" stroke-linecap="round" stroke-linejoin="round"/></svg>
<div class="r" style="left:670px;top:647px;width:38px;height:23px;background:#282828;border-radius:4px;"></div>
<svg class="r" style="left:674px;top:649.5px;" width="18" height="18" viewBox="0 0 18 18"><circle cx="9.0" cy="9.0" r="8.0" fill="#e8e8e8"/><path d="M9.0 9.0 V1 A8.0 8.0 0 0 0 1 9.0Z" fill="#1d1d1d"/><path d="M9.0 9.0 H17 A8.0 8.0 0 0 1 9.0 17Z" fill="#1d1d1d"/><circle cx="9.0" cy="9.0" r="8.0" fill="none" stroke="#e8e8e8" stroke-width="1.3"/></svg>
<svg class="r" style="left:694px;top:656px;" width="10" height="6" viewBox="0 0 10 6"><path d="M1.5 1.5 L5 4.8 L8.5 1.5" fill="none" stroke="#cfcfcf" stroke-width="1.5" stroke-linecap="round" stroke-linejoin="round"/></svg>
<div class="r" style="left:708px;top:647px;width:150px;height:23px;background:#181818;"></div>
<div class="t " style="left:717px;top:651.20px;font-size:15.95px;line-height:15.95px;color:#e6e6e6;transform:scaleX(0.9091);transform-origin:0 0;">std_FlagPole_mat</div>
<div class="r" style="left:858px;top:647px;width:104px;height:23px;background:#3d3d3d;border-radius:0 4px 4px 0"></div>
<div class="r" style="left:887px;top:647px;width:1px;height:23px;background:#2e2e2e;"></div>
<div class="r" style="left:912px;top:647px;width:1px;height:23px;background:#2e2e2e;"></div>
<div class="r" style="left:937px;top:647px;width:1px;height:23px;background:#2e2e2e;"></div>
<div class="t " style="left:867px;top:651.20px;font-size:15.95px;line-height:15.95px;color:#e6e6e6;transform:scaleX(0.9091);transform-origin:0 0;">2</div>
<svg class="r" style="left:890px;top:649px;" width="20" height="18" viewBox="0 0 20 18"><path d="M10 2 L16 4 V9 C16 13 13 15 10 16 C7 15 4 13 4 9 V4Z" fill="none" stroke="#9a9a9a" stroke-width="1.4"/></svg>
<svg class="r" style="left:915px;top:649px;" width="20" height="18" viewBox="0 0 20 18"><path d="M6 5 V2 H13 L16 5 V13 H12 M3 5 H11 V16 H3Z" fill="none" stroke="#cfcfcf" stroke-width="1.4"/></svg>
<svg class="r" style="left:941px;top:650px;" width="18" height="16" viewBox="0 0 18 16"><path d="M4 3 L14 13 M14 3 L4 13" stroke="#d0d0d0" stroke-width="1.6"/></svg>
<svg class="r" style="left:971px;top:648px;" width="22" height="22" viewBox="0 0 22 22"><path d="M12 2 L19 9 L16.5 10 L13 13.5 L12.5 17 L4 8.5 L7.5 8 L11 4.5Z" fill="none" stroke="#8a8a8a" stroke-width="1.4"/><path d="M7 14 L3 18" stroke="#8a8a8a" stroke-width="1.6"/></svg>
<div class="r" style="left:1423px;top:647px;width:23px;height:23px;background:#2a2a2a;border-radius:4px"></div>
<svg class="r" style="left:1425px;top:649px;" width="19" height="19" viewBox="0 0 19 19"><path d="M5 7 L9 3 L13 7 M9 3 V16 H16" fill="none" stroke="#666" stroke-width="1.3"/></svg>
<div class="r" style="left:1453px;top:647px;width:64px;height:23px;background:#262626;border-radius:4px;"></div>
<div class="r" style="left:1453px;top:647px;width:24px;height:23px;background:#3e3e3e;border-radius:4px 0 0 4px"></div>
<svg class="r" style="left:1455px;top:649px;" width="20" height="19" viewBox="0 0 20 19"><g transform="rotate(45 10 9.5)"><path d="M4 16 V9 A6 6 0 0 1 16 9 V16 H12.5 V9 A2.5 2.5 0 0 0 7.5 9 V16Z" fill="none" stroke="#c8c8c8" stroke-width="1.3" stroke-linejoin="round"/></g></svg>
<svg class="r" style="left:1480px;top:649px;" width="20" height="19" viewBox="0 0 20 19"><path d="M3 12 H18 M3 8 H18 M8 5 V18 M14 5 V18" stroke="#ccc" stroke-width="1.2"/><rect x="4" y="3" width="5" height="5" fill="#e6e6e6"/></svg>
<svg class="r" style="left:1504px;top:656px;" width="10" height="6" viewBox="0 0 10 6"><path d="M1.5 1.5 L5 4.8 L8.5 1.5" fill="none" stroke="#cfcfcf" stroke-width="1.5" stroke-linecap="round" stroke-linejoin="round"/></svg>
<div class="r" style="left:1525px;top:647px;width:48px;height:23px;background:#262626;border-radius:4px;"></div>
<div class="r" style="left:1525px;top:647px;width:24px;height:23px;background:#4772b3;border-radius:4px 0 0 4px"></div>
<svg class="r" style="left:1527px;top:649px;" width="20" height="19" viewBox="0 0 20 19"><circle cx="11" cy="8" r="5.5" fill="#fff"/><path d="M4 10 A6 6 0 1 0 12 17" fill="none" stroke="#fff" stroke-width="1.6"/></svg>
<svg class="r" style="left:1556px;top:656px;" width="10" height="6" viewBox="0 0 10 6"><path d="M1.5 1.5 L5 4.8 L8.5 1.5" fill="none" stroke="#cfcfcf" stroke-width="1.5" stroke-linecap="round" stroke-linejoin="round"/></svg>
<svg class="r" style="left:-4px;top:694px;" width="10" height="14" viewBox="0 0 10 14"><path d="M2 2 L7 7 L2 12" fill="none" stroke="#bbb" stroke-width="1.5"/></svg>
<svg class="r" style="left:20px;top:691px;" width="20" height="18" viewBox="0 0 20 18"><path d="M2 6 V2 H6 M12 2 H16 V6 M16 12 V16 H12 M6 16 H2 V12" fill="none" stroke="#cfcfcf" stroke-width="1.3"/><rect x="5" y="5" width="8" height="8" fill="#e6e6e6"/></svg>
<div class="t " style="left:51.1px;top:692.90px;font-size:15.95px;line-height:15.95px;color:#e6e6e6;transform:scaleX(0.9091);transform-origin:0 0;">Pole</div>
<svg class="r" style="left:99px;top:693px;" width="10" height="14" viewBox="0 0 10 14"><path d="M2 2 L7 7 L2 12" fill="none" stroke="#cfcfcf" stroke-width="1.5"/></svg>
<svg class="r" style="left:119px;top:691px;" width="20" height="18" viewBox="0 0 20 18"><path d="M3 3 H16 L9.5 15Z" fill="none" stroke="#e6e6e6" stroke-width="1.4"/><rect x="1" y="1" width="4" height="4" fill="#1d1d1d" stroke="#e6e6e6" stroke-width="1.2"/><rect x="14" y="1" width="4" height="4" fill="#1d1d1d" stroke="#e6e6e6" stroke-width="1.2"/><rect x="7.5" y="13" width="4" height="4" fill="#1d1d1d" stroke="#e6e6e6" stroke-width="1.2"/></svg>
<div class="t " style="left:148.9px;top:692.90px;font-size:15.95px;line-height:15.95px;color:#e6e6e6;transform:scaleX(0.9091);transform-origin:0 0;">Cube.002</div>
<svg class="r" style="left:234px;top:693px;" width="10" height="14" viewBox="0 0 10 14"><path d="M2 2 L7 7 L2 12" fill="none" stroke="#cfcfcf" stroke-width="1.5"/></svg>
<svg class="r" style="left:254px;top:691px;" width="18" height="18" viewBox="0 0 18 18"><circle cx="9.0" cy="9.0" r="8.0" fill="#e8e8e8"/><path d="M9.0 9.0 V1 A8.0 8.0 0 0 0 1 9.0Z" fill="#1d1d1d"/><path d="M9.0 9.0 H17 A8.0 8.0 0 0 1 9.0 17Z" fill="#1d1d1d"/><circle cx="9.0" cy="9.0" r="8.0" fill="none" stroke="#e8e8e8" stroke-width="1.3"/></svg>
<div class="t " style="left:283.7px;top:692.90px;font-size:15.95px;line-height:15.95px;color:#e6e6e6;transform:scaleX(0.9091);transform-origin:0 0;">std_FlagPole_mat</div>
<div class="r" style="left:1309px;top:673px;width:274px;height:298px;background:#2e2e2e;border-radius:6px 0 6px 0"></div>
<div class="r" style="left:1553px;top:674px;width:30px;height:297px;background:#1d1d1d;border-radius:0 0 6px 0"></div>
<div class="r" style="left:1320px;top:675px;width:229px;height:182px;background:#3a3a3a;border-radius:5px"></div>
<svg class="r" style="left:1328px;top:687px;" width="14" height="10" viewBox="0 0 14 10"><path d="M2 2 L7 7 L12 2" fill="none" stroke="#cfcfcf" stroke-width="1.4"/></svg>
<div class="t " style="left:1346px;top:683.20px;font-size:15.95px;line-height:15.95px;color:#e6e6e6;transform:scaleX(0.9091);transform-origin:0 0;">Node</div>
<svg class="r" style="left:1524px;top:686px;" width="16" height="8" viewBox="0 0 16 8"><g fill="#aaa"><rect x="1" y="1" width="2" height="2"/><rect x="5" y="1" width="2" height="2"/><rect x="9" y="1" width="2" height="2"/><rect x="13" y="1" width="2" height="2"/><rect x="1" y="5" width="2" height="2"/><rect x="5" y="5" width="2" height="2"/><rect x="9" y="5" width="2" height="2"/><rect x="13" y="5" width="2" height="2"/></g></svg>
<div class="r" style="left:1330px;top:717px;width:208px;height:22px;background:#545454;border-radius:4px"></div>
<svg class="r" style="left:1333px;top:719px;" width="22" height="18" viewBox="0 0 22 18"><path d="M4 8 A6 6 0 0 1 16 6 M18 10 A6 6 0 0 1 6 12" fill="none" stroke="#e0e0e0" stroke-width="1.5"/><path d="M14 3 L17 6 L13 7Z M8 15 L5 12 L9 11Z" fill="#e0e0e0"/></svg>
<div class="t " style="left:1407px;top:720.40px;font-size:15.95px;line-height:15.95px;color:#e6e6e6;transform:scaleX(0.9091);transform-origin:0 0;">Reset Node</div>
<div class="t " style="left:1330.3px;top:764.60px;font-size:15.95px;line-height:15.95px;color:#c8c8c8;transform:scaleX(0.9091);transform-origin:0 0;">Name:</div>
<div class="r" style="left:1382.5px;top:761.5px;width:155.3px;height:22.2px;background:#1d1d1d;border-radius:4px"></div>
<svg class="r" style="left:1386px;top:764px;" width="20" height="18" viewBox="0 0 20 18"><rect x="2" y="2" width="12" height="14" rx="2" fill="none" stroke="#e0e0e0" stroke-width="1.4"/><path d="M2 6 H14" stroke="#e0e0e0" stroke-width="1.4"/><circle cx="15" cy="11" r="3" fill="#999"/></svg>
<div class="t " style="left:1414.6px;top:764.60px;font-size:15.95px;line-height:15.95px;color:#e6e6e6;transform:scaleX(0.9091);transform-origin:0 0;">Shader to RGB</div>
<div class="t " style="left:1330.3px;top:795.90px;font-size:15.95px;line-height:15.95px;color:#c8c8c8;transform:scaleX(0.9091);transform-origin:0 0;">Label:</div>
<div class="r" style="left:1382.5px;top:792.5px;width:155.3px;height:22.2px;background:#1d1d1d;border-radius:4px"></div>
<svg class="r" style="left:1386px;top:795px;" width="20" height="18" viewBox="0 0 20 18"><rect x="2" y="2" width="12" height="14" rx="2" fill="none" stroke="#e0e0e0" stroke-width="1.4"/><path d="M2 6 H14" stroke="#e0e0e0" stroke-width="1.4"/><circle cx="15" cy="11" r="3" fill="#999"/></svg>
<svg class="r" style="left:1348px;top:835px;" width="8" height="14" viewBox="0 0 8 14"><path d="M2 2 L6 7 L2 12" fill="none" stroke="#cfcfcf" stroke-width="1.4"/></svg>
<div class="r" style="left:1362.3px;top:834.4px;width:16.3px;height:16.3px;background:#545454;border-radius:3px"></div>
<div class="t " style="left:1382px;top:835.70px;font-size:15.95px;line-height:15.95px;color:#e6e6e6;transform:scaleX(0.9091);transform-origin:0 0;">Color</div>
<svg class="r" style="left:1493px;top:834px;" width="22" height="17" viewBox="0 0 22 17"><circle cx="3" cy="3" r="2" fill="#e0e0e0"/><circle cx="3" cy="8.5" r="2" fill="#e0e0e0"/><circle cx="3" cy="14" r="2" fill="#e0e0e0"/><path d="M8 3 H20 M8 8.5 H20 M8 14 H20" stroke="#e0e0e0" stroke-width="1.2"/></svg>
<div class="r" style="left:1320px;top:860px;width:229px;height:30px;background:#3a3a3a;border-radius:5px"></div>
<svg class="r" style="left:1330px;top:868px;" width="8" height="14" viewBox="0 0 8 14"><path d="M2 2 L6 7 L2 12" fill="none" stroke="#cfcfcf" stroke-width="1.4"/></svg>
<div class="t " style="left:1346px;top:867.50px;font-size:15.95px;line-height:15.95px;color:#e6e6e6;transform:scaleX(0.9091);transform-origin:0 0;">Properties</div>
<svg class="r" style="left:1524px;top:870px;" width="16" height="8" viewBox="0 0 16 8"><g fill="#aaa"><rect x="1" y="1" width="2" height="2"/><rect x="5" y="1" width="2" height="2"/><rect x="9" y="1" width="2" height="2"/><rect x="13" y="1" width="2" height="2"/><rect x="1" y="5" width="2" height="2"/><rect x="5" y="5" width="2" height="2"/><rect x="9" y="5" width="2" height="2"/><rect x="13" y="5" width="2" height="2"/></g></svg>
<div class="r" style="left:1558.4px;top:679.8px;width:21.2px;height:53.90000000000009px;background:#303030;border-radius:0 5px 5px 0;box-shadow:0 0 0 1px #161616"></div>
<div class="r" style="left:1558.4px;top:679.8px;width:21.2px;height:53.90000000000009px;display:flex;align-items:center;justify-content:center;"><span style="writing-mode:vertical-rl;font-size:14.5px;line-height:14.5px;color:#f0f0f0;white-space:nowrap">Node</span></div>
<div class="r" style="left:1558.4px;top:740px;width:21.2px;height:49px;background:#252525;border-radius:0 5px 5px 0;box-shadow:0 0 0 1px #161616"></div>
<div class="r" style="left:1558.4px;top:740px;width:21.2px;height:49px;display:flex;align-items:center;justify-content:center;"><span style="writing-mode:vertical-rl;font-size:14.5px;line-height:14.5px;color:#cfcfcf;white-space:nowrap">Tool</span></div>
<div class="r" style="left:1558.4px;top:795.8px;width:21.2px;height:50.700000000000045px;background:#252525;border-radius:0 5px 5px 0;box-shadow:0 0 0 1px #161616"></div>
<div class="r" style="left:1558.4px;top:795.8px;width:21.2px;height:50.700000000000045px;display:flex;align-items:center;justify-content:center;"><span style="writing-mode:vertical-rl;font-size:14.5px;line-height:14.5px;color:#cfcfcf;white-space:nowrap">View</span></div>
<div class="r" style="left:1558.4px;top:853px;width:21.2px;height:68.60000000000002px;background:#252525;border-radius:0 5px 5px 0;box-shadow:0 0 0 1px #161616"></div>
<div class="r" style="left:1558.4px;top:853px;width:21.2px;height:68.60000000000002px;display:flex;align-items:center;justify-content:center;"><span style="writing-mode:vertical-rl;font-size:14.5px;line-height:14.5px;color:#cfcfcf;white-space:nowrap">Options</span></div>
<div class="r" style="left:1558.4px;top:928px;width:21.2px;height:47px;background:#252525;border-radius:0 5px 5px 0;box-shadow:0 0 0 1px #161616"></div>
<div class="r" style="left:1558.4px;top:928px;width:21.2px;height:47px;display:flex;align-items:center;justify-content:center;"><span style="writing-mode:vertical-rl;font-size:14.5px;line-height:14.5px;color:#cfcfcf;white-space:nowrap">Node</span></div>
<div class="r" style="left:0px;top:971px;width:1914px;height:24px;background:#181818;"></div>
<svg class="r" style="left:13px;top:975px;" width="12" height="18" viewBox="0 0 12 18"><rect x="1" y="1" width="10" height="16" rx="5" fill="none" stroke="#cfcfcf" stroke-width="1.3"/><path d="M2 7 H6 V1 Q2 1 2 5Z" fill="#cfcfcf"/></svg>
<div class="t " style="left:41px;top:977.20px;font-size:15.95px;line-height:15.95px;color:#c8c8c8;transform:scaleX(0.9091);transform-origin:0 0;">Select</div>
<svg class="r" style="left:294px;top:975px;" width="12" height="18" viewBox="0 0 12 18"><rect x="1" y="1" width="10" height="16" rx="5" fill="none" stroke="#cfcfcf" stroke-width="1.3"/><path d="M5 2 H7 V7 H5Z" fill="#cfcfcf"/></svg>
<div class="t " style="left:322px;top:977.20px;font-size:15.95px;line-height:15.95px;color:#c8c8c8;transform:scaleX(0.9091);transform-origin:0 0;">Pan View</div>
<svg class="r" style="left:574px;top:975px;" width="12" height="18" viewBox="0 0 12 18"><rect x="1" y="1" width="10" height="16" rx="5" fill="none" stroke="#cfcfcf" stroke-width="1.3"/><path d="M10 7 H6 V1 Q10 1 10 5Z" fill="#cfcfcf"/></svg>
<div class="t " style="left:604px;top:977.20px;font-size:15.95px;line-height:15.95px;color:#c8c8c8;transform:scaleX(0.9091);transform-origin:0 0;">Node</div>
<div class="t " style="left:1868.5px;top:977.20px;font-size:15.95px;line-height:15.95px;color:#9a9a9a;transform:scaleX(0.9091);transform-origin:0 0;">4.0.2</div>
</body></html>
